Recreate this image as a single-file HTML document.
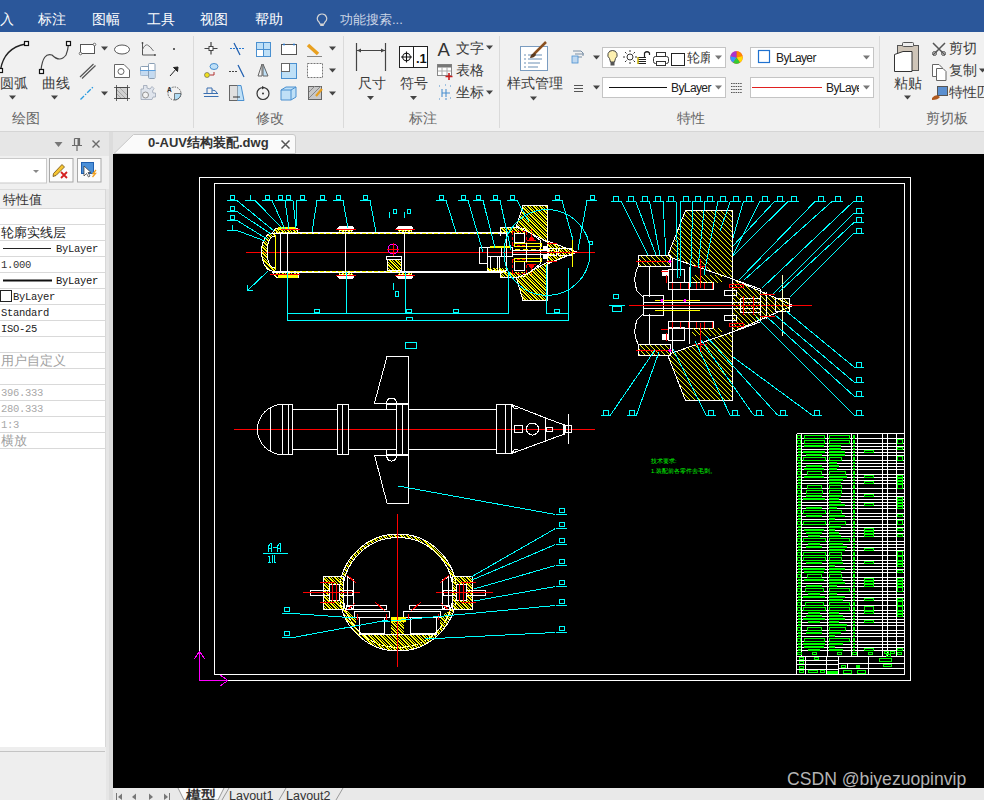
<!DOCTYPE html>
<html><head><meta charset="utf-8">
<style>
*{margin:0;padding:0;box-sizing:border-box}
html,body{width:984px;height:800px;overflow:hidden;background:#f0f0f0;font-family:"Liberation Sans",sans-serif;position:relative}
.abs{position:absolute}
#menubar{left:0;top:0;width:984px;height:32px;background:#2b579a}
#menubar span{position:absolute;top:12px;color:#fff;font-size:13.5px;line-height:16px;white-space:nowrap}
#ribbon{left:0;top:32px;width:984px;height:100px;background:#f1f1f1;border-bottom:1px solid #d5d5d5}
.sep{position:absolute;top:4px;width:1px;height:92px;background:#dadada}
.glabel{position:absolute;top:78px;font-size:14px;line-height:16px;color:#666;white-space:nowrap}
.rt{position:absolute;font-size:14px;line-height:16px;color:#3a3a3a;white-space:nowrap}
.combo{position:absolute;background:#fff;border:1px solid #c4c4c4}
#leftpanel{left:0;top:132px;width:109px;height:668px;background:#e6e6e6}
#splitter{left:109px;top:132px;width:4px;height:668px;background:#dcdcdc}
.row{position:absolute;left:0;width:105px;height:16px;border-bottom:1px solid #d9d9d9;font-size:12px;line-height:15px;color:#222;white-space:nowrap;overflow:hidden;background:#fff}
.mono{font-family:"Liberation Mono",monospace;font-size:10.5px;letter-spacing:-0.3px}
.gray{color:#9a9a9a}
#canvas{left:113px;top:154px;width:871px;height:634px;background:#000;overflow:hidden}
#tabbar{left:113px;top:132px;width:871px;height:22px;background:#e5e5e5}
#bottombar{left:113px;top:788px;width:871px;height:12px;background:#e9e9e9}
</style></head><body>
<div id="menubar" class="abs">
 <span style="left:0">入</span>
 <span style="left:38px">标注</span>
 <span style="left:92px">图幅</span>
 <span style="left:147px">工具</span>
 <span style="left:200px">视图</span>
 <span style="left:255px">帮助</span>
 <span style="left:340px;color:#cdd6e6;font-size:13px">功能搜索...</span>
 <svg class="abs" style="left:316px;top:13px" width="12" height="14" viewBox="0 0 12 14"><path d="M6,1 A4.5,4.5 0 0 0 3,9 L4,11 L8,11 L9,9 A4.5,4.5 0 0 0 6,1 Z" fill="none" stroke="#d4d4d4" stroke-width="1.2"/><rect x="4.2" y="11" width="3.6" height="2" fill="#d4d4d4"/></svg>
</div>
<div id="ribbon" class="abs">
 <div class="sep" style="left:193px"></div>
 <div class="sep" style="left:343px"></div>
 <div class="sep" style="left:499px"></div>
 <div class="sep" style="left:879px"></div>
 <div class="glabel" style="left:12px">绘图</div>
 <div class="glabel" style="left:256px">修改</div>
 <div class="glabel" style="left:409px">标注</div>
 <div class="glabel" style="left:677px">特性</div>
 <div class="glabel" style="left:926px">剪切板</div>
 <div class="rt" style="left:0;top:43px">圆弧</div>
 <div class="rt" style="left:42px;top:43px">曲线</div>
 <div class="rt" style="left:358px;top:43px">尺寸</div>
 <div class="rt" style="left:400px;top:43px">符号</div>
 <div class="rt" style="left:456px;top:8px">文字</div>
 <div class="rt" style="left:456px;top:30px">表格</div>
 <div class="rt" style="left:456px;top:52px">坐标</div>
 <div class="rt" style="left:507px;top:43px">样式管理</div>
 <div class="rt" style="left:894px;top:43px">粘贴</div>
 <div class="rt" style="left:949px;top:8px">剪切</div>
 <div class="rt" style="left:949px;top:30px">复制</div>
 <div class="rt" style="left:949px;top:52px">特性匹</div>
 <div class="combo" style="left:602px;top:15px;width:124px;height:21px"></div>
 <div class="combo" style="left:602px;top:45px;width:124px;height:21px"></div>
 <div class="combo" style="left:750px;top:15px;width:124px;height:21px"></div>
 <div class="combo" style="left:750px;top:45px;width:124px;height:21px"></div>
 <div class="rt" style="left:687px;top:18px;font-size:13px;width:23px;overflow:hidden">轮廓</div>
 <div class="rt" style="left:671px;top:48px;font-size:12px;color:#222;letter-spacing:-0.6px">ByLayer</div>
 <div class="rt" style="left:776px;top:18px;font-size:12px;color:#222;letter-spacing:-0.6px">ByLayer</div>
 <div class="rt" style="left:826px;top:48px;font-size:12px;color:#222;width:33px;overflow:hidden;letter-spacing:-0.6px">ByLayer</div>
</div>
<svg class="abs" style="left:0;top:0" width="984" height="131" viewBox="0 0 984 131">
<path d="M0.5,70 Q4,48 25.5,44" stroke="#222" fill="none" stroke-width="1.3"/>
<rect x="24.5" y="41.5" width="4" height="4" fill="#fff" stroke="#111" stroke-width="1.2"/>
<rect x="-1.5" y="68.5" width="4" height="4" fill="#fff" stroke="#111" stroke-width="1.2"/>
<path d="M9.0,95.5 L16.0,95.5 L12.5,99.5 Z" fill="#444"/>
<path d="M41,70 Q43,52 52,55 Q60,63 66,55 Q68,50 68.5,44" stroke="#444" fill="none" stroke-width="1.2"/>
<rect x="39.5" y="69.5" width="4" height="4" fill="#fff" stroke="#111" stroke-width="1.2"/>
<rect x="66.5" y="41.5" width="4" height="4" fill="#fff" stroke="#111" stroke-width="1.2"/>
<path d="M51.0,95.5 L58.0,95.5 L54.5,99.5 Z" fill="#444"/>
<rect x="80.5" y="44.5" width="14" height="9" fill="#fff" stroke="#555"/>
<circle cx="80.5" cy="53.5" r="1.3" fill="#fff" stroke="#555" stroke-width=".8"/><circle cx="94.5" cy="44.5" r="1.3" fill="#fff" stroke="#555" stroke-width=".8"/>
<path d="M101.0,46.5 L108.0,46.5 L104.5,50.5 Z" fill="#444"/>
<ellipse cx="122" cy="49.5" rx="7.5" ry="4.5" fill="#fff" stroke="#555"/>
<path d="M142.5,43 L142.5,55 L155,55" stroke="#555" fill="none"/><path d="M142.5,49.5 Q145,44 147.5,45 Q150,46 153.5,51" stroke="#666" fill="none" stroke-width=".9"/><circle cx="142.5" cy="43" r=".9" fill="#444"/><circle cx="155" cy="55" r=".9" fill="#444"/>
<circle cx="174" cy="49" r="1" fill="#333"/>
<path d="M80,77 L93.5,64 M82,78.5 L95.5,65.5" stroke="#555" stroke-width="1.2"/>
<path d="M114.5,64.5 L124,64.5 L129.5,70 L129.5,77.5 L114.5,77.5 Z" fill="#fff" stroke="#666"/><circle cx="121" cy="71.5" r="3" fill="none" stroke="#666"/>
<rect x="140.5" y="66.5" width="10" height="9" rx="1" fill="#fff" stroke="#8a9fb5"/><rect x="140.5" y="71" width="10" height="4.5" fill="#c4daf0"/><rect x="148.5" y="63.5" width="6.5" height="15" rx="1" fill="#fff" stroke="#8a9fb5"/><rect x="149" y="71" width="5.5" height="7" fill="#c4daf0"/><path d="M140,70.5 L155.5,70.5" stroke="#5aa0e0"/>
<path d="M170,76 L177,68 M173.5,67.5 L178,67 L177.5,71.5 Z" stroke="#222" fill="#222"/>
<path d="M80.5,99.5 L94,86" stroke="#2a9be0" stroke-width="1.3" stroke-dasharray="5,1.5,1.5,1.5"/>
<path d="M101.0,91.5 L108.0,91.5 L104.5,95.5 Z" fill="#444"/>
<rect x="116.5" y="87.5" width="11" height="11" fill="#d0d0d0" stroke="#555"/><path d="M114,87.5 L130,87.5 M114,98.5 L130,98.5 M116.5,85 L116.5,101 M127.5,85 L127.5,101" stroke="#444" stroke-width=".8"/><path d="M117,90 L125,98 M117,94 L121,98 M120,88 L127,95" stroke="#999" stroke-width=".8"/>
<path d="M141,99.5 L141,89 L143.5,89 L143.5,85.5 L147,85.5 L147,88 L150,89 L152,86.5 L154,88.5 L152.5,91 L153,93 L155.5,93 L155.5,97 L153,97 L152,99.5 Z" fill="#dfe4ec" stroke="#9aa5b5" stroke-width=".8"/><circle cx="145.5" cy="95" r="3" fill="#f1f1f1" stroke="#888" stroke-width=".9"/>
<circle cx="174.5" cy="93.5" r="6.5" fill="none" stroke="#444" stroke-width=".8" stroke-dasharray="1.5,1"/><path d="M174.5,93.5 L181,93.5 A6.5,6.5 0 0 1 174.5,100 Z" fill="#b0dcf5" stroke="#333" stroke-width=".6"/><text x="167" y="92" font-family="Liberation Sans" font-size="6.5" font-weight="bold" fill="#222">A</text>
<path d="M211,42 L211,54.5 M204.5,48.5 L217.5,48.5" stroke="#444" stroke-width="1.2"/><rect x="209" y="46.5" width="4" height="4" fill="#fff" stroke="#444"/>
<path d="M230,48.5 L245,48.5" stroke="#2a7ad0" stroke-dasharray="2,1"/><path d="M234,43 L240,55" stroke="#1f5fb0" stroke-width="1.3"/>
<rect x="256.5" y="42.5" width="7" height="7" fill="#bfe0f7" stroke="#4a90d0"/><rect x="263.5" y="42.5" width="7" height="7" fill="#bfe0f7" stroke="#4a90d0"/><rect x="256.5" y="49.5" width="7" height="7" fill="#fff" stroke="#4a90d0"/><rect x="263.5" y="49.5" width="7" height="7" fill="#bfe0f7" stroke="#4a90d0"/>
<rect x="281.5" y="44.5" width="15" height="10" fill="#fff" stroke="#555"/><circle cx="284" cy="44.5" r="1" fill="#2a7ad0"/><circle cx="294" cy="44.5" r="1" fill="#2a7ad0"/>
<path d="M308,45 L318,54" stroke="#e8a020" stroke-width="3.5"/><path d="M307,56.5 L322,56.5" stroke="#888"/>
<path d="M329.0,46.5 L336.0,46.5 L332.5,50.5 Z" fill="#444"/>
<circle cx="207" cy="75" r="2.5" fill="#f0e020" stroke="#555" stroke-width=".6"/><ellipse cx="214" cy="66.5" rx="4" ry="3" fill="#bfe0f7" stroke="#4a90d0"/><path d="M210,75 L214,75 L214,72" stroke="#b03030" fill="none"/>
<path d="M229,71.5 L237,71.5" stroke="#444" stroke-dasharray="2,1"/><path d="M238,65 L244,77" stroke="#1f5fb0" stroke-width="1.3"/>
<path d="M262,64 L258,76 L262,76 Z" fill="none" stroke="#666"/><path d="M263,64 L263,76 L268,76 Z" fill="#bfe0f7" stroke="#666"/>
<rect x="281.5" y="63.5" width="15" height="15" fill="#bfe0f7" stroke="#4a90d0"/><rect x="281.5" y="63.5" width="8" height="8" fill="#fff" stroke="#666"/>
<rect x="307.5" y="63.5" width="15" height="14" fill="#fff" stroke="#777" stroke-dasharray="2,1"/>
<path d="M329.0,68.5 L336.0,68.5 L332.5,72.5 Z" fill="#444"/>
<path d="M203.5,93.5 L218,93.5 M204,96.5 L218.5,96.5 M207,93 L207,88 L212,88 L212,93 M212,90 Q216,90 217,93" stroke="#3a6fb0" fill="none"/>
<rect x="229.5" y="85.5" width="8" height="15" fill="#e0e0e0" stroke="#666"/><path d="M237.5,85.5 L241,85.5 L244,100.5 L237.5,100.5" fill="#bfe0f7" stroke="#4a90d0"/><path d="M233,97 L240,97" stroke="#333"/>
<circle cx="263" cy="93.5" r="6" fill="none" stroke="#333" stroke-width="1.2"/><circle cx="263" cy="93.5" r="1" fill="#333"/><path d="M262,86 L265,87.5 L262,89.5" fill="#333"/>
<path d="M281,90 L286,87 L296,87 L296,97 L291,100 L281,100 Z M281,90 L291,90 L291,100 M291,90 L296,87" fill="#bfe0f7" stroke="#4a90d0"/>
<rect x="308.5" y="86.5" width="13" height="13" fill="#c8c8c8" stroke="#666"/><path d="M309,92 L315,86 M309,98 L321,86" stroke="#888"/><path d="M316,96 L322,89" stroke="#e8a020" stroke-width="2.2"/>
<path d="M329.0,91.5 L336.0,91.5 L332.5,95.5 Z" fill="#444"/>
<path d="M356.5,43 L356.5,71 M385.5,43 L385.5,71 M357,50.5 L385,50.5" stroke="#444" stroke-width="1.2"/><path d="M357,50.5 L361,48.5 L361,52.5 Z M385,50.5 L381,48.5 L381,52.5 Z" fill="#444"/>
<path d="M367.0,96 L374.0,96 L370.5,100 Z" fill="#444"/>
<rect x="399.5" y="46.5" width="28" height="21" fill="#fff" stroke="#222"/><line x1="413.5" y1="46.5" x2="413.5" y2="67.5" stroke="#222"/><circle cx="406.5" cy="57" r="3.8" fill="none" stroke="#111" stroke-width="1.1"/><path d="M401,57 L412,57 M406.5,51.5 L406.5,62.5" stroke="#111" stroke-width="1.1"/>
<text x="416" y="62.5" font-family="Liberation Sans" font-weight="bold" font-size="13" fill="#111">.1</text>
<path d="M410.0,96 L417.0,96 L413.5,100 Z" fill="#444"/>
<text x="437.5" y="56" font-family="Liberation Sans" font-size="18.5" fill="#333">A</text>
<path d="M486.0,45.5 L493.0,45.5 L489.5,49.5 Z" fill="#444"/>
<rect x="437.5" y="64.5" width="14" height="11" fill="#fff" stroke="#888"/><rect x="437.5" y="64.5" width="14" height="3" fill="#777"/><path d="M442,67 L442,75 M447,67 L447,75 M438,71 L451,71" stroke="#aaa"/><path d="M449,73 L449,80 M445.5,76.5 L452.5,76.5" stroke="#c81e1e" stroke-width="1.6"/>
<path d="M439,86 L440,86 M445,85 L446,85 M450,86 L451,86 M439,99 L440,99 M445,99 L447,99 M450,98 L451,98 M442,89 L442,97 M442,93 L450,93 M446,89 L446,97" stroke="#4a90d0" stroke-width="1.1"/>
<path d="M486.0,90.5 L493.0,90.5 L489.5,94.5 Z" fill="#444"/>
<rect x="520.5" y="46.5" width="27" height="24" fill="#fff" stroke="#7a9cc0"/>
<path d="M524,55 L526,55 M528,55 L542,55 M524,59 L526,59 M528,59 L542,59 M524,63 L526,63 M528,63 L540,63 M524,67 L526,67 M528,67 L538,67" stroke="#6a8fb5"/>
<path d="M534,54 L546,42" stroke="#8a5020" stroke-width="2.5"/><path d="M530,58 Q531,53 535,53 L536,55 Q534,58 530,58 Z" fill="#5a3a20"/>
<path d="M530.0,96.5 L537.0,96.5 L533.5,100.5 Z" fill="#444"/>
<path d="M573,51 L581,51 L583,53 L583,56 M575,54 L584,54 M573,57 L582,57" stroke="#7a8fa5" fill="none"/><rect x="572" y="56" width="6" height="7" fill="#bfd8f0" stroke="#4a90d0" stroke-width=".8"/>
<path d="M593.0,55.5 L600.0,55.5 L596.5,59.5 Z" fill="#444"/>
<path d="M574,85.5 L583,85.5 M574,88.5 L583,88.5 M574,91.5 L583,91.5" stroke="#555" stroke-width="1.2"/>
<path d="M593.0,85.5 L600.0,85.5 L596.5,89.5 Z" fill="#444"/>
<path d="M612.5,50.5 A4.5,4.5 0 0 0 609.5,58.5 L610.5,62 L614.5,62 L615.5,58.5 A4.5,4.5 0 0 0 612.5,50.5 Z" fill="#fdf0b0" stroke="#333" stroke-width=".9"/><rect x="610.5" y="62" width="4" height="3.5" fill="#555"/>
<circle cx="630" cy="57" r="3" fill="none" stroke="#333"/><path d="M630,50 L630,52 M630,62 L630,64 M623,57 L625,57 M635,57 L637,57 M625,52 L626.5,53.5 M633.5,60.5 L635,62 M635,52 L633.5,53.5 M626.5,60.5 L625,62" stroke="#333"/>
<path d="M638,57.5 L646,57.5 M638,59.5 L646,59.5 M638,61.5 L646,61.5 M638,63.5 L646,63.5" stroke="#222" stroke-width="1"/><path d="M638,57 L638,64" stroke="#c8b000" stroke-width="1.5"/><path d="M644.5,57 L644.5,53 Q647,50.5 649.5,53 L649.5,55" stroke="#222" fill="none" stroke-width="1.2"/>
<rect x="653.5" y="56.5" width="15" height="7" rx="2" fill="#fff" stroke="#333"/><rect x="656.5" y="52.5" width="9" height="4" fill="#fff" stroke="#333"/><rect x="656.5" y="61.5" width="9" height="4" fill="#fff" stroke="#333"/>
<rect x="671.5" y="53.5" width="13" height="12" fill="#fff" stroke="#222"/>
<path d="M715.0,55.5 L722.0,55.5 L718.5,59.5 Z" fill="#777"/>
<line x1="609" y1="87.5" x2="667" y2="87.5" stroke="#111"/>
<path d="M715.0,85.5 L722.0,85.5 L718.5,89.5 Z" fill="#777"/>
<circle cx="736.5" cy="57.5" r="6.2" fill="#f33"/><path d="M736.5,57.5 L736.5,51.3 A6.2,6.2 0 0 1 742.5,56 Z" fill="#f80"/><path d="M736.5,57.5 L742.5,56 A6.2,6.2 0 0 1 740,62.5 Z" fill="#fd0"/><path d="M736.5,57.5 L740,62.5 A6.2,6.2 0 0 1 733,62.5 Z" fill="#3c3"/><path d="M736.5,57.5 L733,62.5 A6.2,6.2 0 0 1 730.5,56 Z" fill="#39f"/><path d="M736.5,57.5 L730.5,56 A6.2,6.2 0 0 1 736.5,51.3 Z" fill="#a3c"/>
<path d="M731,83.5 L742,83.5 M731,86.5 L742,86.5 M731,89.5 L742,89.5 M731,92.5 L742,92.5" stroke="#555" stroke-dasharray="1.5,.8"/>
<rect x="758.5" y="50.5" width="11" height="12" fill="#fff" stroke="#1f72d0" stroke-width="1.2"/>
<path d="M863.0,55.5 L870.0,55.5 L866.5,59.5 Z" fill="#777"/>
<line x1="752" y1="87.5" x2="822" y2="87.5" stroke="#e02020"/>
<path d="M863.0,85.5 L870.0,85.5 L866.5,89.5 Z" fill="#777"/>
<rect x="897.5" y="45.5" width="21" height="25" fill="#cfc5b8" stroke="#555"/><rect x="902.5" y="42.5" width="11" height="4" rx="1" fill="#eee" stroke="#555"/>
<path d="M894.5,54.5 L903,51.5 L912,51.5 L912,71.5 L894.5,71.5 Z" fill="#fff" stroke="#333"/>
<path d="M904.0,95.5 L911.0,95.5 L907.5,99.5 Z" fill="#444"/>
<path d="M933,43 L945,55 M945,43 L933,55" stroke="#555" stroke-width="1.5"/><circle cx="934.5" cy="53.5" r="2" fill="none" stroke="#555"/><circle cx="943.5" cy="53.5" r="2" fill="none" stroke="#555"/>
<path d="M932.5,64.5 L939,64.5 L942,67.5 L942,76.5 L932.5,76.5 Z" fill="#fff" stroke="#666"/><path d="M936.5,68.5 L943,68.5 L946,71.5 L946,80.5 L936.5,80.5 Z" fill="#fff" stroke="#666"/>
<path d="M979.0,68.5 L986.0,68.5 L982.5,72.5 Z" fill="#444"/>
<rect x="937.5" y="86.5" width="10" height="9" fill="#5a8fd0" stroke="#555"/><path d="M932,98 Q936,93 940,97 Q938,100 932,100 Z" fill="#b05a20"/>
</svg>
<div id="leftpanel" class="abs">
<svg class="abs" style="left:0;top:0" width="109" height="668" viewBox="0 132 109 668">
<path d="M54.5,142 L62.5,142 L58.5,147 Z" fill="#777"/>
<path d="M74.5,138.5 L79.5,138.5 L79.5,145.5 M74.5,138.5 L74.5,145.5 M72,145.5 L82,145.5 M77,146 L77,151" stroke="#6a6a6a" fill="none" stroke-width="1.2"/><rect x="77.5" y="139" width="1.5" height="6" fill="#6a6a6a"/>
<path d="M92.5,140.5 L99.5,147.5 M99.5,140.5 L92.5,147.5" stroke="#6a6a6a" stroke-width="1.4"/>
<rect x="0" y="156" width="109" height="33" fill="#f0f0f0"/>
<rect x="-1" y="158.5" width="47.5" height="24.5" fill="#fff" stroke="#c9c9c9"/>
<path d="M33,170 L39,170 L36,173 Z" fill="#888"/>
<rect x="49.5" y="158.5" width="23.5" height="23.5" fill="#fcfcfc" stroke="#a8a8a8"/>
<rect x="77.5" y="158.5" width="23.5" height="23.5" fill="#fcfcfc" stroke="#a8a8a8"/>
<path d="M53.5,173.5 L62,164.5 L64.5,167 L56,175.5 L53,176.5 Z" fill="#f5c431" stroke="#6b4a10" stroke-width=".8"/>
<path d="M61,177 L67,183 M67,177 L61,183" stroke="#d42020" stroke-width="1.8" transform="translate(0,-5)"/>
<rect x="81.5" y="162.5" width="12" height="11" fill="#4a8fd8" stroke="#1f5fb0"/>
<path d="M84,166 L84,176 L86.5,173.5 L88.5,177 L90,176 L88,172.5 L91,172.5 Z" fill="#fff" stroke="#333" stroke-width=".7"/>
<path d="M96,170 L93,173.5 L95.5,173.5 L92.5,177" stroke="#f0a020" fill="none" stroke-width="1.3"/>
<rect x="0" y="189" width="106" height="558" fill="#fff"/>
<rect x="0" y="189" width="105" height="19" fill="#f0f0f0"/>
<line x1="0" y1="189.5" x2="105" y2="189.5" stroke="#dcdcdc"/>
<line x1="105.5" y1="189" x2="105.5" y2="747" stroke="#d8d8d8"/>
<line x1="0" y1="208.5" x2="105" y2="208.5" stroke="#d9d9d9"/>
<line x1="0" y1="224.5" x2="105" y2="224.5" stroke="#d9d9d9"/>
<line x1="0" y1="240.5" x2="105" y2="240.5" stroke="#d9d9d9"/>
<line x1="0" y1="256.5" x2="105" y2="256.5" stroke="#d9d9d9"/>
<line x1="0" y1="272.5" x2="105" y2="272.5" stroke="#d9d9d9"/>
<line x1="0" y1="288.5" x2="105" y2="288.5" stroke="#d9d9d9"/>
<line x1="0" y1="304.5" x2="105" y2="304.5" stroke="#d9d9d9"/>
<line x1="0" y1="320.5" x2="105" y2="320.5" stroke="#d9d9d9"/>
<line x1="0" y1="336.5" x2="105" y2="336.5" stroke="#d9d9d9"/>
<line x1="0" y1="352.5" x2="105" y2="352.5" stroke="#d9d9d9"/>
<line x1="0" y1="368.5" x2="105" y2="368.5" stroke="#d9d9d9"/>
<line x1="0" y1="384.5" x2="105" y2="384.5" stroke="#d9d9d9"/>
<line x1="0" y1="400.5" x2="105" y2="400.5" stroke="#d9d9d9"/>
<line x1="0" y1="416.5" x2="105" y2="416.5" stroke="#d9d9d9"/>
<line x1="0" y1="432.5" x2="105" y2="432.5" stroke="#d9d9d9"/>
<line x1="0" y1="448.5" x2="105" y2="448.5" stroke="#d9d9d9"/>
<line x1="3" y1="248.5" x2="51" y2="248.5" stroke="#222"/>
<line x1="3" y1="280.5" x2="52" y2="280.5" stroke="#111" stroke-width="2"/>
<rect x="0.5" y="290.5" width="11" height="11" fill="none" stroke="#222"/>
<rect x="0" y="747" width="106" height="53" fill="#eeeeee"/>
<line x1="0" y1="751.5" x2="105" y2="751.5" stroke="#c4c4c4"/>
</svg>
<div class="abs " style="left:3px;top:60px;white-space:nowrap;line-height:16px;font-size:12.5px;color:#333">特性值</div>
<div class="abs " style="left:1px;top:93px;white-space:nowrap;line-height:16px;font-size:12.5px;color:#222">轮廓实线层</div>
<div class="abs mono" style="left:56px;top:109px;white-space:nowrap;line-height:16px;color:#222">ByLayer</div>
<div class="abs mono" style="left:1px;top:125px;white-space:nowrap;line-height:16px;color:#333">1.000</div>
<div class="abs mono" style="left:56px;top:141px;white-space:nowrap;line-height:16px;color:#111">ByLayer</div>
<div class="abs mono" style="left:13px;top:157px;white-space:nowrap;line-height:16px;color:#222">ByLayer</div>
<div class="abs mono" style="left:1px;top:173px;white-space:nowrap;line-height:16px;color:#222">Standard</div>
<div class="abs mono" style="left:1px;top:189px;white-space:nowrap;line-height:16px;color:#222">ISO-25</div>
<div class="abs " style="left:1px;top:221px;white-space:nowrap;line-height:16px;font-size:13px;color:#a0a0a0">用户自定义</div>
<div class="abs mono" style="left:1px;top:253px;white-space:nowrap;line-height:16px;color:#a8a8a8">396.333</div>
<div class="abs mono" style="left:1px;top:269px;white-space:nowrap;line-height:16px;color:#a8a8a8">280.333</div>
<div class="abs mono" style="left:1px;top:285px;white-space:nowrap;line-height:16px;color:#a8a8a8">1:3</div>
<div class="abs " style="left:1px;top:301px;white-space:nowrap;line-height:16px;font-size:13px;color:#a0a0a0">横放</div>
</div>
<div id="splitter" class="abs"></div>
<div id="tabbar" class="abs">
 <svg class="abs" style="left:0;top:0" width="200" height="22" viewBox="113 132 200 22"><path d="M114,153.5 L133.5,134.5 L293,134.5 Q295.5,134.5 295.5,137 L295.5,153.5 Z" fill="#fafafa" stroke="#c8c8c8" stroke-width="1"/>
 <path d="M281.5,140.5 L289.5,148.5 M289.5,140.5 L281.5,148.5" stroke="#555" stroke-width="1.5"/></svg>
 <div class="abs" style="left:35px;top:3px;font-size:13px;font-weight:bold;color:#333;line-height:16px;white-space:nowrap">0-AUV结构装配.dwg</div>
</div>
<div id="canvas" class="abs">
<svg width="871" height="634" viewBox="113 154 871 634" style="position:absolute;left:0;top:0" shape-rendering="crispEdges">
<defs><pattern id="hy" width="6" height="6" patternUnits="userSpaceOnUse"><g fill="#ffff00" shape-rendering="crispEdges"><rect x="0" y="0" width="1" height="1"/><rect x="3" y="0" width="1" height="1"/><rect x="4" y="0" width="1" height="1"/><rect x="1" y="1" width="1" height="1"/><rect x="4" y="1" width="1" height="1"/><rect x="5" y="1" width="1" height="1"/><rect x="0" y="2" width="1" height="1"/><rect x="2" y="2" width="1" height="1"/><rect x="5" y="2" width="1" height="1"/><rect x="0" y="3" width="1" height="1"/><rect x="1" y="3" width="1" height="1"/><rect x="3" y="3" width="1" height="1"/><rect x="1" y="4" width="1" height="1"/><rect x="2" y="4" width="1" height="1"/><rect x="4" y="4" width="1" height="1"/><rect x="2" y="5" width="1" height="1"/><rect x="3" y="5" width="1" height="1"/><rect x="5" y="5" width="1" height="1"/></g></pattern><pattern id="hy2" width="5" height="5" patternUnits="userSpaceOnUse"><g fill="#ffff00" shape-rendering="crispEdges"><rect x="0" y="0" width="1" height="1"/><rect x="1" y="1" width="1" height="1"/><rect x="2" y="2" width="1" height="1"/><rect x="3" y="3" width="1" height="1"/><rect x="4" y="4" width="1" height="1"/></g></pattern></defs>
<rect x="199.5" y="177.5" width="711" height="503" stroke="#ffffff" fill="none" stroke-width="1"/>
<rect x="214.5" y="183.5" width="690" height="491" stroke="#ffffff" fill="none" stroke-width="1"/>
<line x1="199.5" y1="651" x2="199.5" y2="680.5" stroke="#ff00ff" stroke-width="1" />
<line x1="199.5" y1="680.5" x2="228" y2="680.5" stroke="#ff00ff" stroke-width="1" />
<line x1="199.5" y1="651" x2="194.5" y2="659" stroke="#ff00ff" stroke-width="1" />
<line x1="199.5" y1="651" x2="204.5" y2="659" stroke="#ff00ff" stroke-width="1" />
<line x1="228" y1="680.5" x2="220" y2="675" stroke="#ff00ff" stroke-width="1" />
<line x1="228" y1="680.5" x2="220" y2="686" stroke="#ff00ff" stroke-width="1" />
<line x1="246" y1="252.5" x2="595" y2="252.5" stroke="#ff0000" stroke-width="1" />
<line x1="276" y1="233" x2="506" y2="233" stroke="#ffffff" stroke-width="2" />
<line x1="276" y1="272" x2="506" y2="272" stroke="#ffffff" stroke-width="2" />
<line x1="290" y1="233.5" x2="500" y2="233.5" stroke="#ffff00" stroke-width="1" stroke-dasharray="4,2"/>
<line x1="290" y1="271.5" x2="400" y2="271.5" stroke="#ffff00" stroke-width="1" stroke-dasharray="4,2"/>
<line x1="280.5" y1="233" x2="280.5" y2="272" stroke="#ffffff" stroke-width="1" />
<line x1="287.5" y1="233" x2="287.5" y2="272" stroke="#ffffff" stroke-width="1" />
<line x1="345.5" y1="233" x2="345.5" y2="272" stroke="#ffffff" stroke-width="1" />
<line x1="404.5" y1="233" x2="404.5" y2="272" stroke="#ffffff" stroke-width="1" />
<path d="M276,272 L272.5,271 A11,19 0 0 1 272.5,233 L276,233 L276,237 L274,236.5 A7,15.5 0 0 0 274,267.5 L276,268 Z" stroke="none" fill="url(#hy)" stroke-width="1"/>
<path d="M276,233 L272.5,233 A11,19 0 0 0 272.5,271 L276,272" stroke="#ffffff" fill="none" stroke-width="1"/>
<path d="M276,237 L274,236.5 A7,15.5 0 0 0 274,267.5 L276,268" stroke="#ffffff" fill="none" stroke-width="1"/>
<line x1="275.5" y1="236" x2="275.5" y2="269" stroke="#ffff00" stroke-width="1" />
<path d="M272,233 L276,228 L297,228 L297,233 Z" stroke="#ffffff" fill="url(#hy)" stroke-width="1"/>
<path d="M272,272 L276,277 L298,277 L298,272 Z" stroke="#ffffff" fill="url(#hy)" stroke-width="1"/>
<rect x="278" y="227" width="18" height="3" fill="#ffff00"/>
<rect x="278" y="275" width="20" height="3" fill="#ffff00"/>
<line x1="281" y1="229.5" x2="300" y2="229.5" stroke="#ff0000" stroke-width="1" />
<line x1="270" y1="274.5" x2="300" y2="274.5" stroke="#ff0000" stroke-width="1" />
<ellipse cx="346" cy="228.5" rx="8" ry="2.5" stroke="#ffffff" fill="#ffffff" stroke-width="1"/>
<line x1="336" y1="229.5" x2="356" y2="229.5" stroke="#ff0000" stroke-width="1" />
<rect x="339" y="230" width="14" height="2" fill="url(#hy)"/>
<ellipse cx="346" cy="276.5" rx="8" ry="2.5" stroke="#ffffff" fill="#ffffff" stroke-width="1"/>
<line x1="336" y1="275.5" x2="356" y2="275.5" stroke="#ff0000" stroke-width="1" />
<rect x="339" y="273" width="14" height="2" fill="url(#hy)"/>
<ellipse cx="405" cy="228.5" rx="8" ry="2.5" stroke="#ffffff" fill="#ffffff" stroke-width="1"/>
<line x1="395" y1="229.5" x2="415" y2="229.5" stroke="#ff0000" stroke-width="1" />
<rect x="398" y="230" width="14" height="2" fill="url(#hy)"/>
<ellipse cx="405" cy="276.5" rx="8" ry="2.5" stroke="#ffffff" fill="#ffffff" stroke-width="1"/>
<line x1="395" y1="275.5" x2="415" y2="275.5" stroke="#ff0000" stroke-width="1" />
<rect x="398" y="273" width="14" height="2" fill="url(#hy)"/>
<circle cx="393" cy="249" r="5" stroke="#ff00ff" fill="none" stroke-width="1"/>
<line x1="393" y1="243" x2="393" y2="256" stroke="#ff0000" stroke-width="1" />
<line x1="387" y1="249.5" x2="399" y2="249.5" stroke="#ff0000" stroke-width="1" />
<rect x="386.5" y="256.5" width="15" height="3" stroke="#ffffff" fill="none" stroke-width="1"/>
<rect x="387" y="259" width="15" height="12" fill="url(#hy)"/>
<rect x="387.5" y="259.5" width="14" height="11" stroke="#ffffff" fill="none" stroke-width="1"/>
<path d="M500.5,236 L500.5,227.5 L515,227.5 L525,229 L540,240 L540,264 L525,276 L515,277.5 L500.5,277.5 L500.5,268" stroke="#ffffff" fill="none" stroke-width="1"/>
<rect x="501" y="228" width="24" height="5" fill="url(#hy)"/>
<rect x="501" y="272" width="24" height="5" fill="url(#hy)"/>
<line x1="500.5" y1="228" x2="500.5" y2="236" stroke="#ffffff" stroke-width="1" />
<line x1="500.5" y1="268" x2="500.5" y2="277" stroke="#ffffff" stroke-width="1" />
<line x1="506.5" y1="232" x2="506.5" y2="270" stroke="#ffffff" stroke-width="1" />
<rect x="479.5" y="247.5" width="8" height="16" stroke="#ffffff" fill="none" stroke-width="1"/>
<rect x="487.5" y="247.5" width="25" height="9" stroke="#ffffff" fill="none" stroke-width="1"/>
<line x1="501.5" y1="247" x2="501.5" y2="257" stroke="#ffffff" stroke-width="1" />
<rect x="487.5" y="256.5" width="19" height="14" stroke="#ffffff" fill="none" stroke-width="1"/>
<line x1="490.5" y1="257" x2="490.5" y2="270" stroke="#ffffff" stroke-width="1" />
<line x1="497.5" y1="257" x2="497.5" y2="270" stroke="#ffffff" stroke-width="1" />
<line x1="499.5" y1="257" x2="499.5" y2="270" stroke="#ffffff" stroke-width="1" />
<rect x="487" y="268" width="19" height="3" fill="url(#hy)"/>
<rect x="490" y="246" width="20" height="2" fill="#ffff00"/>
<rect x="514.5" y="233.5" width="10" height="9" stroke="#ffffff" fill="none" stroke-width="1"/>
<line x1="512" y1="231.0" x2="527" y2="231.0" stroke="#ff0000" stroke-width="1" stroke-dasharray="3,2"/>
<line x1="512" y1="245.0" x2="527" y2="245.0" stroke="#ff0000" stroke-width="1" stroke-dasharray="3,2"/>
<line x1="512.5" y1="231.5" x2="512.5" y2="244.5" stroke="#ff0000" stroke-width="1" stroke-dasharray="3,2"/>
<line x1="526.5" y1="231.5" x2="526.5" y2="244.5" stroke="#ff0000" stroke-width="1" stroke-dasharray="3,2"/>
<rect x="514.5" y="261.5" width="10" height="9" stroke="#ffffff" fill="none" stroke-width="1"/>
<line x1="512" y1="259.0" x2="527" y2="259.0" stroke="#ff0000" stroke-width="1" stroke-dasharray="3,2"/>
<line x1="512" y1="273.0" x2="527" y2="273.0" stroke="#ff0000" stroke-width="1" stroke-dasharray="3,2"/>
<line x1="512.5" y1="259.5" x2="512.5" y2="272.5" stroke="#ff0000" stroke-width="1" stroke-dasharray="3,2"/>
<line x1="526.5" y1="259.5" x2="526.5" y2="272.5" stroke="#ff0000" stroke-width="1" stroke-dasharray="3,2"/>
<rect x="514.5" y="243.5" width="27" height="3" stroke="#ffff00" fill="none" stroke-width="1"/>
<rect x="514.5" y="258.5" width="27" height="3" stroke="#ffff00" fill="none" stroke-width="1"/>
<line x1="531.5" y1="229" x2="531.5" y2="241" stroke="#ff0000" stroke-width="1" />
<line x1="527" y1="240.5" x2="536" y2="240.5" stroke="#ff0000" stroke-width="1" />
<polygon points="529,240 534,240 531.5,236" stroke="#ff0000" fill="#ff0000" stroke-width="1"/>
<line x1="531.5" y1="264" x2="531.5" y2="276" stroke="#ff0000" stroke-width="1" />
<line x1="527" y1="264.5" x2="536" y2="264.5" stroke="#ff0000" stroke-width="1" />
<polygon points="529,265 534,265 531.5,269" stroke="#ff0000" fill="#ff0000" stroke-width="1"/>
<line x1="526.5" y1="243" x2="526.5" y2="262" stroke="#ffffff" stroke-width="1" />
<line x1="512" y1="250.5" x2="555" y2="250.5" stroke="#ffffff" stroke-width="1" />
<line x1="512" y1="254.5" x2="555" y2="254.5" stroke="#ffffff" stroke-width="1" />
<line x1="515" y1="249.5" x2="550" y2="249.5" stroke="#ffff00" stroke-width="1" stroke-dasharray="5,3"/>
<polygon points="523,205.5 547.5,205.5 547.5,242 528,232 516.5,226" stroke="#ffffff" fill="url(#hy)" stroke-width="1"/>
<polygon points="516.5,278 528,273 547.5,262 547.5,300.5 523,300.5" stroke="#ffffff" fill="url(#hy)" stroke-width="1"/>
<polygon points="547,241 577,252 547,264" stroke="#ffffff" fill="url(#hy)" stroke-width="1"/>
<rect x="548.5" y="248.5" width="8" height="7" stroke="#ffffff" fill="none" stroke-width="1"/>
<rect x="558.5" y="248.5" width="14" height="7" stroke="#ffffff" fill="none" stroke-width="1"/>
<line x1="540" y1="252.5" x2="578" y2="252.5" stroke="#ff0000" stroke-width="1" />
<circle cx="545" cy="248" r="2" stroke="#ffffff" fill="#ffffff" stroke-width="1"/>
<circle cx="545" cy="257" r="2" stroke="#ffffff" fill="#ffffff" stroke-width="1"/>
<line x1="547" y1="243.5" x2="557" y2="243.5" stroke="#ff0000" stroke-width="1" />
<line x1="547" y1="261.5" x2="557" y2="261.5" stroke="#ff0000" stroke-width="1" />
<line x1="572.5" y1="239" x2="572.5" y2="267" stroke="#ffff00" stroke-width="1" />
<circle cx="547" cy="252.5" r="43" stroke="#00ffff" fill="none" stroke-width="1"/>
<line x1="287.5" y1="272" x2="287.5" y2="321" stroke="#00ffff" stroke-width="1" />
<line x1="346.5" y1="272" x2="346.5" y2="314" stroke="#00ffff" stroke-width="1" />
<line x1="405.5" y1="272" x2="405.5" y2="314" stroke="#00ffff" stroke-width="1" />
<line x1="508.5" y1="272" x2="508.5" y2="314" stroke="#00ffff" stroke-width="1" />
<line x1="546.5" y1="265" x2="546.5" y2="314" stroke="#00ffff" stroke-width="1" />
<line x1="568.5" y1="268" x2="568.5" y2="321" stroke="#00ffff" stroke-width="1" />
<line x1="287" y1="313.5" x2="509" y2="313.5" stroke="#00ffff" stroke-width="1" />
<line x1="546" y1="313.5" x2="569" y2="313.5" stroke="#00ffff" stroke-width="1" />
<line x1="287" y1="320.5" x2="569" y2="320.5" stroke="#00ffff" stroke-width="1" />
<rect x="314.5" y="309.5" width="5" height="3" stroke="#00ffff" fill="none" stroke-width="1"/>
<rect x="406.5" y="309.5" width="5" height="3" stroke="#00ffff" fill="none" stroke-width="1"/>
<rect x="453.5" y="309.5" width="5" height="3" stroke="#00ffff" fill="none" stroke-width="1"/>
<rect x="554.5" y="309.5" width="5" height="3" stroke="#00ffff" fill="none" stroke-width="1"/>
<rect x="406.5" y="317.5" width="6" height="3" stroke="#00ffff" fill="none" stroke-width="1"/>
<line x1="227" y1="200.5" x2="237" y2="200.5" stroke="#00ffff" stroke-width="1" />
<rect x="230.5" y="195.5" width="4" height="4" stroke="#00ffff" fill="none" stroke-width="1"/>
<line x1="237" y1="200.5" x2="274" y2="231" stroke="#00ffff" stroke-width="1" />
<line x1="227" y1="211.5" x2="237" y2="211.5" stroke="#00ffff" stroke-width="1" />
<rect x="230.5" y="206.5" width="4" height="4" stroke="#00ffff" fill="none" stroke-width="1"/>
<line x1="237" y1="211.5" x2="271" y2="234" stroke="#00ffff" stroke-width="1" />
<line x1="227" y1="220.5" x2="237" y2="220.5" stroke="#00ffff" stroke-width="1" />
<rect x="230.5" y="215.5" width="4" height="4" stroke="#00ffff" fill="none" stroke-width="1"/>
<line x1="237" y1="220.5" x2="267" y2="239" stroke="#00ffff" stroke-width="1" />
<line x1="227" y1="230.5" x2="237" y2="230.5" stroke="#00ffff" stroke-width="1" />
<line x1="232.5" y1="225" x2="232.5" y2="230" stroke="#00ffff" stroke-width="1" />
<line x1="237" y1="230.5" x2="265" y2="241" stroke="#00ffff" stroke-width="1" />
<line x1="245" y1="200.5" x2="255" y2="200.5" stroke="#00ffff" stroke-width="1" />
<line x1="250.5" y1="195" x2="250.5" y2="200" stroke="#00ffff" stroke-width="1" />
<line x1="255" y1="200.5" x2="283" y2="229" stroke="#00ffff" stroke-width="1" />
<line x1="262" y1="200.5" x2="272" y2="200.5" stroke="#00ffff" stroke-width="1" />
<rect x="265.5" y="195.5" width="4" height="4" stroke="#00ffff" fill="none" stroke-width="1"/>
<line x1="272" y1="200.5" x2="285" y2="229" stroke="#00ffff" stroke-width="1" />
<line x1="275" y1="200.5" x2="285" y2="200.5" stroke="#00ffff" stroke-width="1" />
<rect x="278.5" y="195.5" width="4" height="4" stroke="#00ffff" fill="none" stroke-width="1"/>
<line x1="285" y1="200.5" x2="289" y2="229" stroke="#00ffff" stroke-width="1" />
<line x1="283" y1="200.5" x2="293" y2="200.5" stroke="#00ffff" stroke-width="1" />
<rect x="286.5" y="195.5" width="4" height="4" stroke="#00ffff" fill="none" stroke-width="1"/>
<line x1="293" y1="200.5" x2="296" y2="228" stroke="#00ffff" stroke-width="1" />
<line x1="297" y1="200.5" x2="307" y2="200.5" stroke="#00ffff" stroke-width="1" />
<rect x="300.5" y="195.5" width="4" height="4" stroke="#00ffff" fill="none" stroke-width="1"/>
<line x1="297" y1="200.5" x2="296" y2="227" stroke="#00ffff" stroke-width="1" />
<line x1="317" y1="200.5" x2="327" y2="200.5" stroke="#00ffff" stroke-width="1" />
<rect x="320.5" y="195.5" width="4" height="4" stroke="#00ffff" fill="none" stroke-width="1"/>
<line x1="317" y1="200.5" x2="312" y2="232" stroke="#00ffff" stroke-width="1" />
<line x1="333" y1="200.5" x2="343" y2="200.5" stroke="#00ffff" stroke-width="1" />
<rect x="336.5" y="195.5" width="4" height="4" stroke="#00ffff" fill="none" stroke-width="1"/>
<line x1="343" y1="200.5" x2="348" y2="228" stroke="#00ffff" stroke-width="1" />
<line x1="360" y1="200.5" x2="370" y2="200.5" stroke="#00ffff" stroke-width="1" />
<rect x="363.5" y="195.5" width="4" height="4" stroke="#00ffff" fill="none" stroke-width="1"/>
<line x1="370" y1="200.5" x2="376" y2="232" stroke="#00ffff" stroke-width="1" />
<line x1="436" y1="200.5" x2="446" y2="200.5" stroke="#00ffff" stroke-width="1" />
<rect x="439.5" y="195.5" width="4" height="4" stroke="#00ffff" fill="none" stroke-width="1"/>
<line x1="446" y1="200.5" x2="456" y2="232" stroke="#00ffff" stroke-width="1" />
<line x1="458" y1="200.5" x2="468" y2="200.5" stroke="#00ffff" stroke-width="1" />
<rect x="461.5" y="195.5" width="4" height="4" stroke="#00ffff" fill="none" stroke-width="1"/>
<line x1="468" y1="200.5" x2="483" y2="252" stroke="#00ffff" stroke-width="1" />
<line x1="473" y1="200.5" x2="483" y2="200.5" stroke="#00ffff" stroke-width="1" />
<rect x="476.5" y="195.5" width="4" height="4" stroke="#00ffff" fill="none" stroke-width="1"/>
<line x1="483" y1="200.5" x2="495" y2="248" stroke="#00ffff" stroke-width="1" />
<line x1="490" y1="200.5" x2="500" y2="200.5" stroke="#00ffff" stroke-width="1" />
<rect x="493.5" y="195.5" width="4" height="4" stroke="#00ffff" fill="none" stroke-width="1"/>
<line x1="500" y1="200.5" x2="511" y2="250" stroke="#00ffff" stroke-width="1" />
<line x1="507" y1="200.5" x2="517" y2="200.5" stroke="#00ffff" stroke-width="1" />
<rect x="510.5" y="195.5" width="4" height="4" stroke="#00ffff" fill="none" stroke-width="1"/>
<line x1="517" y1="200.5" x2="529" y2="222" stroke="#00ffff" stroke-width="1" />
<line x1="552" y1="200.5" x2="562" y2="200.5" stroke="#00ffff" stroke-width="1" />
<rect x="555.5" y="195.5" width="4" height="4" stroke="#00ffff" fill="none" stroke-width="1"/>
<line x1="562" y1="200.5" x2="573" y2="240" stroke="#00ffff" stroke-width="1" />
<line x1="587" y1="200.5" x2="597" y2="200.5" stroke="#00ffff" stroke-width="1" />
<rect x="590.5" y="195.5" width="4" height="4" stroke="#00ffff" fill="none" stroke-width="1"/>
<line x1="587" y1="200.5" x2="578" y2="250" stroke="#00ffff" stroke-width="1" />
<line x1="389" y1="212" x2="389" y2="218" stroke="#00ffff" stroke-width="1" />
<rect x="393.5" y="209.5" width="3" height="4" stroke="#00ffff" fill="none" stroke-width="1"/>
<line x1="404" y1="212" x2="404" y2="218" stroke="#00ffff" stroke-width="1" />
<rect x="407.5" y="209.5" width="3" height="4" stroke="#00ffff" fill="none" stroke-width="1"/>
<line x1="393.5" y1="283" x2="393.5" y2="290" stroke="#00ffff" stroke-width="1" />
<rect x="395.5" y="291.5" width="3" height="5" stroke="#00ffff" fill="none" stroke-width="1"/>
<rect x="589.5" y="241.5" width="3" height="3" stroke="#00ffff" fill="none" stroke-width="1"/>
<line x1="247" y1="291" x2="268" y2="271" stroke="#00ffff" stroke-width="1" />
<line x1="247" y1="291" x2="248" y2="285" stroke="#00ffff" stroke-width="1" />
<line x1="247" y1="291" x2="253" y2="290" stroke="#00ffff" stroke-width="1" />
<polygon points="685.5,210.5 732.5,210.5 732.5,279 672,258 668,255" stroke="#ffffff" fill="url(#hy2)" stroke-width="1"/>
<polygon points="668,356 672,353 732.5,332 732.5,400.5 685.5,400.5" stroke="#ffffff" fill="url(#hy2)" stroke-width="1"/>
<polygon points="732.5,279 793,305.5 732.5,332" stroke="#ffffff" fill="url(#hy2)" stroke-width="1"/>
<polygon points="672,258 732.5,279 760,289 760,322 732.5,332 672,353" stroke="#ffffff" fill="none" stroke-width="1"/>
<rect x="638" y="255" width="33" height="12" fill="url(#hy2)"/>
<rect x="638.5" y="255.5" width="32" height="11" stroke="#ffffff" fill="none" stroke-width="1"/>
<line x1="636" y1="261.5" x2="672" y2="261.5" stroke="#ff0000" stroke-width="1" />
<circle cx="670" cy="261.5" r="1" stroke="#ff00ff" fill="#ff00ff" stroke-width="1"/>
<rect x="638" y="344" width="33" height="12" fill="url(#hy2)"/>
<rect x="638.5" y="344.5" width="32" height="11" stroke="#ffffff" fill="none" stroke-width="1"/>
<line x1="636" y1="350.5" x2="672" y2="350.5" stroke="#ff0000" stroke-width="1" />
<circle cx="670" cy="350.5" r="1" stroke="#ff00ff" fill="#ff00ff" stroke-width="1"/>
<path d="M638,267 Q632,278 637,291 L643,297 L643,314 L637,320 Q632,333 638,344" stroke="#ffffff" fill="none" stroke-width="1"/>
<line x1="649.5" y1="267" x2="649.5" y2="297" stroke="#ffffff" stroke-width="1" />
<line x1="649.5" y1="314" x2="649.5" y2="344" stroke="#ffffff" stroke-width="1" />
<line x1="689.5" y1="267" x2="689.5" y2="344" stroke="#ffffff" stroke-width="1" />
<rect x="668.5" y="269.5" width="16" height="13" stroke="#ffffff" fill="none" stroke-width="1"/>
<circle cx="665" cy="273.0" r="3" stroke="#ffffff" fill="#ffffff" stroke-width="1"/>
<line x1="666" y1="274.5" x2="666" y2="282.5" stroke="#ff0000" stroke-width="1" />
<line x1="661" y1="271.0" x2="668" y2="271.0" stroke="#ff0000" stroke-width="1" />
<rect x="668.5" y="327.5" width="16" height="13" stroke="#ffffff" fill="none" stroke-width="1"/>
<circle cx="665" cy="337.0" r="3" stroke="#ffffff" fill="#ffffff" stroke-width="1"/>
<line x1="666" y1="332.5" x2="666" y2="340.5" stroke="#ff0000" stroke-width="1" />
<line x1="661" y1="329.0" x2="668" y2="329.0" stroke="#ff0000" stroke-width="1" />
<rect x="643.5" y="295.5" width="20" height="20" stroke="#ffffff" fill="none" stroke-width="1"/>
<rect x="668.5" y="282.5" width="45" height="7" stroke="#ffffff" fill="none" stroke-width="1"/>
<rect x="668.5" y="321.5" width="45" height="7" stroke="#ffffff" fill="none" stroke-width="1"/>
<rect x="692" y="275" width="30" height="8" fill="url(#hy2)"/>
<rect x="692" y="328" width="30" height="8" fill="url(#hy2)"/>
<line x1="672" y1="283" x2="672" y2="289" stroke="#ff0000" stroke-width="1" />
<line x1="672" y1="322" x2="672" y2="328" stroke="#ff0000" stroke-width="1" />
<line x1="680" y1="283" x2="680" y2="289" stroke="#ff0000" stroke-width="1" />
<line x1="680" y1="322" x2="680" y2="328" stroke="#ff0000" stroke-width="1" />
<line x1="688" y1="283" x2="688" y2="289" stroke="#ff0000" stroke-width="1" />
<line x1="688" y1="322" x2="688" y2="328" stroke="#ff0000" stroke-width="1" />
<line x1="696" y1="283" x2="696" y2="289" stroke="#ff0000" stroke-width="1" />
<line x1="696" y1="322" x2="696" y2="328" stroke="#ff0000" stroke-width="1" />
<line x1="704" y1="283" x2="704" y2="289" stroke="#ff0000" stroke-width="1" />
<line x1="704" y1="322" x2="704" y2="328" stroke="#ff0000" stroke-width="1" />
<line x1="712" y1="283" x2="712" y2="289" stroke="#ff0000" stroke-width="1" />
<line x1="712" y1="322" x2="712" y2="328" stroke="#ff0000" stroke-width="1" />
<line x1="700.5" y1="259" x2="700.5" y2="288" stroke="#ff0000" stroke-width="1" />
<line x1="694" y1="266.5" x2="707" y2="266.5" stroke="#ff0000" stroke-width="1" />
<line x1="700.5" y1="323" x2="700.5" y2="352" stroke="#ff0000" stroke-width="1" />
<line x1="694" y1="344.5" x2="707" y2="344.5" stroke="#ff0000" stroke-width="1" />
<line x1="643" y1="302.5" x2="760" y2="302.5" stroke="#ffffff" stroke-width="1" />
<line x1="643" y1="308.5" x2="760" y2="308.5" stroke="#ffffff" stroke-width="1" />
<line x1="655" y1="300.5" x2="700" y2="300.5" stroke="#ffff00" stroke-width="1" />
<line x1="655" y1="310.5" x2="700" y2="310.5" stroke="#ffff00" stroke-width="1" />
<circle cx="662" cy="300.5" r="1" stroke="#ff00ff" fill="#ff00ff" stroke-width="1"/>
<circle cx="685" cy="300.5" r="1" stroke="#ff00ff" fill="#ff00ff" stroke-width="1"/>
<line x1="629" y1="305.5" x2="812" y2="305.5" stroke="#ff0000" stroke-width="1" />
<rect x="729.5" y="284.5" width="14" height="3" stroke="#ff0000" fill="none" stroke-width="1"/>
<rect x="729.5" y="323.5" width="14" height="3" stroke="#ff0000" fill="none" stroke-width="1"/>
<rect x="724.5" y="290.5" width="12" height="5" stroke="#ffffff" fill="none" stroke-width="1"/>
<rect x="724.5" y="315.5" width="12" height="5" stroke="#ffffff" fill="none" stroke-width="1"/>
<rect x="740.5" y="298.5" width="20" height="14" stroke="#ffffff" fill="none" stroke-width="1"/>
<line x1="743" y1="296" x2="743" y2="315" stroke="#ff0000" stroke-width="1" />
<line x1="753" y1="296" x2="753" y2="315" stroke="#ff0000" stroke-width="1" />
<rect x="775.5" y="298.5" width="14" height="13" stroke="#ffffff" fill="none" stroke-width="1"/>
<rect x="776" y="299" width="13" height="12" fill="url(#hy2)"/>
<line x1="766.5" y1="292" x2="766.5" y2="319" stroke="#ffffff" stroke-width="1" />
<line x1="782.5" y1="275" x2="782.5" y2="336" stroke="#ffffc0" stroke-width="1" />
<line x1="760" y1="294.5" x2="775" y2="294.5" stroke="#ff0000" stroke-width="1" />
<line x1="760" y1="316.5" x2="775" y2="316.5" stroke="#ff0000" stroke-width="1" />
<line x1="611" y1="201.0" x2="621" y2="201.0" stroke="#00ffff" stroke-width="1" />
<rect x="613.5" y="196.0" width="5" height="5" stroke="#00ffff" fill="none" stroke-width="1"/>
<line x1="621" y1="201.0" x2="648" y2="255" stroke="#00ffff" stroke-width="1" />
<line x1="625.5" y1="201.0" x2="635.5" y2="201.0" stroke="#00ffff" stroke-width="1" />
<rect x="628.0" y="196.0" width="5" height="5" stroke="#00ffff" fill="none" stroke-width="1"/>
<line x1="635.5" y1="201.0" x2="656" y2="255" stroke="#00ffff" stroke-width="1" />
<line x1="639.5" y1="201.0" x2="649.5" y2="201.0" stroke="#00ffff" stroke-width="1" />
<rect x="642.0" y="196.0" width="5" height="5" stroke="#00ffff" fill="none" stroke-width="1"/>
<line x1="649.5" y1="201.0" x2="660" y2="255" stroke="#00ffff" stroke-width="1" />
<line x1="653" y1="201.0" x2="663" y2="201.0" stroke="#00ffff" stroke-width="1" />
<rect x="655.5" y="196.0" width="5" height="5" stroke="#00ffff" fill="none" stroke-width="1"/>
<line x1="663" y1="201.0" x2="666" y2="255" stroke="#00ffff" stroke-width="1" />
<line x1="666" y1="201.0" x2="676" y2="201.0" stroke="#00ffff" stroke-width="1" />
<rect x="668.5" y="196.0" width="5" height="5" stroke="#00ffff" fill="none" stroke-width="1"/>
<line x1="676" y1="201.0" x2="678" y2="278" stroke="#00ffff" stroke-width="1" />
<line x1="681" y1="201.0" x2="691" y2="201.0" stroke="#00ffff" stroke-width="1" />
<rect x="683.5" y="196.0" width="5" height="5" stroke="#00ffff" fill="none" stroke-width="1"/>
<line x1="681" y1="201.0" x2="680" y2="278" stroke="#00ffff" stroke-width="1" />
<line x1="693" y1="201.0" x2="703" y2="201.0" stroke="#00ffff" stroke-width="1" />
<rect x="695.5" y="196.0" width="5" height="5" stroke="#00ffff" fill="none" stroke-width="1"/>
<line x1="693" y1="201.0" x2="690" y2="288" stroke="#00ffff" stroke-width="1" />
<line x1="705" y1="201.0" x2="715" y2="201.0" stroke="#00ffff" stroke-width="1" />
<rect x="707.5" y="196.0" width="5" height="5" stroke="#00ffff" fill="none" stroke-width="1"/>
<line x1="705" y1="201.0" x2="698" y2="268" stroke="#00ffff" stroke-width="1" />
<line x1="718" y1="201.0" x2="728" y2="201.0" stroke="#00ffff" stroke-width="1" />
<rect x="720.5" y="196.0" width="5" height="5" stroke="#00ffff" fill="none" stroke-width="1"/>
<line x1="718" y1="201.0" x2="704" y2="275" stroke="#00ffff" stroke-width="1" />
<line x1="730.5" y1="201.0" x2="740.5" y2="201.0" stroke="#00ffff" stroke-width="1" />
<rect x="733.0" y="196.0" width="5" height="5" stroke="#00ffff" fill="none" stroke-width="1"/>
<line x1="730.5" y1="201.0" x2="720" y2="231" stroke="#00ffff" stroke-width="1" />
<line x1="743.5" y1="201.0" x2="753.5" y2="201.0" stroke="#00ffff" stroke-width="1" />
<rect x="746.0" y="196.0" width="5" height="5" stroke="#00ffff" fill="none" stroke-width="1"/>
<line x1="743.5" y1="201.0" x2="733" y2="238" stroke="#00ffff" stroke-width="1" />
<line x1="760" y1="201.0" x2="770" y2="201.0" stroke="#00ffff" stroke-width="1" />
<rect x="762.5" y="196.0" width="5" height="5" stroke="#00ffff" fill="none" stroke-width="1"/>
<line x1="760" y1="201.0" x2="733" y2="255" stroke="#00ffff" stroke-width="1" />
<line x1="775" y1="201.0" x2="785" y2="201.0" stroke="#00ffff" stroke-width="1" />
<rect x="777.5" y="196.0" width="5" height="5" stroke="#00ffff" fill="none" stroke-width="1"/>
<line x1="775" y1="201.0" x2="733" y2="246" stroke="#00ffff" stroke-width="1" />
<line x1="788.5" y1="201.0" x2="798.5" y2="201.0" stroke="#00ffff" stroke-width="1" />
<rect x="791.0" y="196.0" width="5" height="5" stroke="#00ffff" fill="none" stroke-width="1"/>
<line x1="788.5" y1="201.0" x2="733" y2="256" stroke="#00ffff" stroke-width="1" />
<line x1="815.5" y1="201.0" x2="825.5" y2="201.0" stroke="#00ffff" stroke-width="1" />
<rect x="818.0" y="196.0" width="5" height="5" stroke="#00ffff" fill="none" stroke-width="1"/>
<line x1="815.5" y1="201.0" x2="739" y2="280" stroke="#00ffff" stroke-width="1" />
<line x1="832.5" y1="201.0" x2="842.5" y2="201.0" stroke="#00ffff" stroke-width="1" />
<rect x="835.0" y="196.0" width="5" height="5" stroke="#00ffff" fill="none" stroke-width="1"/>
<line x1="832.5" y1="201.0" x2="744" y2="280" stroke="#00ffff" stroke-width="1" />
<line x1="854" y1="201.0" x2="864" y2="201.0" stroke="#00ffff" stroke-width="1" />
<rect x="856.5" y="196.0" width="5" height="5" stroke="#00ffff" fill="none" stroke-width="1"/>
<line x1="854" y1="201.0" x2="762" y2="288" stroke="#00ffff" stroke-width="1" />
<line x1="854" y1="213.0" x2="864" y2="213.0" stroke="#00ffff" stroke-width="1" />
<rect x="856.5" y="208.0" width="5" height="5" stroke="#00ffff" fill="none" stroke-width="1"/>
<line x1="854" y1="213.0" x2="773" y2="294" stroke="#00ffff" stroke-width="1" />
<line x1="854" y1="222.5" x2="864" y2="222.5" stroke="#00ffff" stroke-width="1" />
<rect x="856.5" y="217.5" width="5" height="5" stroke="#00ffff" fill="none" stroke-width="1"/>
<line x1="854" y1="222.5" x2="779" y2="292" stroke="#00ffff" stroke-width="1" />
<line x1="854" y1="233.0" x2="864" y2="233.0" stroke="#00ffff" stroke-width="1" />
<rect x="856.5" y="228.0" width="5" height="5" stroke="#00ffff" fill="none" stroke-width="1"/>
<line x1="854" y1="233.0" x2="790" y2="297" stroke="#00ffff" stroke-width="1" />
<line x1="854" y1="367.0" x2="864" y2="367.0" stroke="#00ffff" stroke-width="1" />
<rect x="856.5" y="362.0" width="5" height="5" stroke="#00ffff" fill="none" stroke-width="1"/>
<line x1="854" y1="367.0" x2="786" y2="311" stroke="#00ffff" stroke-width="1" />
<line x1="854" y1="382.0" x2="864" y2="382.0" stroke="#00ffff" stroke-width="1" />
<rect x="856.5" y="377.0" width="5" height="5" stroke="#00ffff" fill="none" stroke-width="1"/>
<line x1="854" y1="382.0" x2="775" y2="315" stroke="#00ffff" stroke-width="1" />
<line x1="854" y1="396.0" x2="864" y2="396.0" stroke="#00ffff" stroke-width="1" />
<rect x="856.5" y="391.0" width="5" height="5" stroke="#00ffff" fill="none" stroke-width="1"/>
<line x1="854" y1="396.0" x2="767" y2="317" stroke="#00ffff" stroke-width="1" />
<line x1="854" y1="415.0" x2="864" y2="415.0" stroke="#00ffff" stroke-width="1" />
<rect x="856.5" y="410.0" width="5" height="5" stroke="#00ffff" fill="none" stroke-width="1"/>
<line x1="854" y1="415.0" x2="756" y2="317" stroke="#00ffff" stroke-width="1" />
<line x1="600.5" y1="415.0" x2="610.5" y2="415.0" stroke="#00ffff" stroke-width="1" />
<rect x="603.0" y="410.0" width="5" height="5" stroke="#00ffff" fill="none" stroke-width="1"/>
<line x1="610.5" y1="415.0" x2="655" y2="350" stroke="#00ffff" stroke-width="1" />
<line x1="626.5" y1="415.0" x2="636.5" y2="415.0" stroke="#00ffff" stroke-width="1" />
<rect x="629.0" y="410.0" width="5" height="5" stroke="#00ffff" fill="none" stroke-width="1"/>
<line x1="636.5" y1="415.0" x2="659" y2="352" stroke="#00ffff" stroke-width="1" />
<line x1="706" y1="415.0" x2="716" y2="415.0" stroke="#00ffff" stroke-width="1" />
<rect x="708.5" y="410.0" width="5" height="5" stroke="#00ffff" fill="none" stroke-width="1"/>
<line x1="706" y1="415.0" x2="673" y2="349" stroke="#00ffff" stroke-width="1" />
<line x1="730" y1="415.0" x2="740" y2="415.0" stroke="#00ffff" stroke-width="1" />
<rect x="732.5" y="410.0" width="5" height="5" stroke="#00ffff" fill="none" stroke-width="1"/>
<line x1="730" y1="415.0" x2="695" y2="341" stroke="#00ffff" stroke-width="1" />
<line x1="753.5" y1="415.0" x2="763.5" y2="415.0" stroke="#00ffff" stroke-width="1" />
<rect x="756.0" y="410.0" width="5" height="5" stroke="#00ffff" fill="none" stroke-width="1"/>
<line x1="753.5" y1="415.0" x2="701" y2="340" stroke="#00ffff" stroke-width="1" />
<line x1="777.5" y1="415.0" x2="787.5" y2="415.0" stroke="#00ffff" stroke-width="1" />
<rect x="780.0" y="410.0" width="5" height="5" stroke="#00ffff" fill="none" stroke-width="1"/>
<line x1="777.5" y1="415.0" x2="706" y2="336" stroke="#00ffff" stroke-width="1" />
<line x1="812" y1="415.0" x2="822" y2="415.0" stroke="#00ffff" stroke-width="1" />
<rect x="814.5" y="410.0" width="5" height="5" stroke="#00ffff" fill="none" stroke-width="1"/>
<line x1="812" y1="415.0" x2="733" y2="357" stroke="#00ffff" stroke-width="1" />
<rect x="613.5" y="294.5" width="5" height="4" stroke="#00ffff" fill="none" stroke-width="1"/>
<line x1="609" y1="305.5" x2="625" y2="305.5" stroke="#00ffff" stroke-width="1" />
<rect x="612.5" y="306.5" width="9" height="5" stroke="#00ffff" fill="none" stroke-width="1"/>
<line x1="234" y1="429.5" x2="595" y2="429.5" stroke="#ff0000" stroke-width="1" />
<path d="M282.5,404.5 A25,25 0 0 0 282.5,454.5" stroke="#ffffff" fill="none" stroke-width="1"/>
<line x1="270.5" y1="407" x2="270.5" y2="451" stroke="#ffffff" stroke-width="1" />
<rect x="282.5" y="404.5" width="6" height="50" stroke="#ffffff" fill="none" stroke-width="1"/>
<rect x="288.5" y="404.5" width="4" height="50" stroke="#ffffff" fill="none" stroke-width="1"/>
<line x1="292" y1="409.5" x2="337" y2="409.5" stroke="#ffffff" stroke-width="1" />
<line x1="292" y1="449.5" x2="337" y2="449.5" stroke="#ffffff" stroke-width="1" />
<rect x="337.5" y="404.5" width="5" height="50" stroke="#ffffff" fill="none" stroke-width="1"/>
<rect x="342.5" y="404.5" width="6" height="50" stroke="#ffffff" fill="none" stroke-width="1"/>
<line x1="348" y1="409.5" x2="396" y2="409.5" stroke="#ffffff" stroke-width="1" />
<line x1="348" y1="449.5" x2="396" y2="449.5" stroke="#ffffff" stroke-width="1" />
<rect x="396.5" y="404.5" width="6" height="50" stroke="#ffffff" fill="none" stroke-width="1"/>
<rect x="402.5" y="404.5" width="6" height="50" stroke="#ffffff" fill="none" stroke-width="1"/>
<line x1="408" y1="409.5" x2="497" y2="409.5" stroke="#ffffff" stroke-width="1" />
<line x1="408" y1="449.5" x2="497" y2="449.5" stroke="#ffffff" stroke-width="1" />
<rect x="386.5" y="404.5" width="10" height="5" stroke="#ffffff" fill="none" stroke-width="1"/>
<rect x="386.5" y="449.5" width="10" height="5" stroke="#ffffff" fill="none" stroke-width="1"/>
<path d="M386.5,404 Q387,398 391.5,398 Q396.5,398 396.5,404" stroke="#ffffff" fill="none" stroke-width="1"/>
<path d="M386.5,455 Q387,461 391.5,461 Q396.5,461 396.5,455" stroke="#ffffff" fill="none" stroke-width="1"/>
<rect x="496.5" y="404.5" width="9" height="49" stroke="#ffffff" fill="none" stroke-width="1"/>
<rect x="505.5" y="404.5" width="6" height="49" stroke="#ffffff" fill="none" stroke-width="1"/>
<path d="M511.5,404.5 L545.5,418 L545.5,441 L511.5,453.5" stroke="#ffffff" fill="none" stroke-width="1"/>
<path d="M545.5,418 L563,424.5 L563,434.5 L545.5,441" stroke="#ffffff" fill="none" stroke-width="1"/>
<path d="M511.5,404.5 L515,409 L519,407.5 M511.5,453.5 L515,449 L519,450.5" stroke="#ffffff" fill="none" stroke-width="1"/>
<rect x="514.5" y="425.5" width="8" height="7" stroke="#ffffff" fill="none" stroke-width="1"/>
<circle cx="532.5" cy="429" r="6" stroke="#ffffff" fill="none" stroke-width="1"/>
<rect x="546.5" y="427" width="6" height="4" stroke="#ffffff" fill="none" stroke-width="1"/>
<line x1="564.5" y1="424" x2="564.5" y2="435" stroke="#ffffff" stroke-width="1" />
<rect x="565.5" y="425.5" width="6" height="7" stroke="#ffffff" fill="none" stroke-width="1"/>
<line x1="568.5" y1="414" x2="568.5" y2="444" stroke="#ffffff" stroke-width="1" />
<polygon points="387,356.5 408.5,356.5 408.5,403 374.5,403" stroke="#ffffff" fill="none" stroke-width="1"/>
<polygon points="374.5,455 408.5,455 408.5,503 387,503" stroke="#ffffff" fill="none" stroke-width="1"/>
<rect x="405.5" y="342.5" width="11" height="6" stroke="#00ffff" fill="none" stroke-width="1"/>
<path d="M398,534 A58.5,58.5 0 1 1 397.9,534 Z M398,537.5 A55,55 0 1 0 398.1,537.5 Z" stroke="none" fill="url(#hy)" stroke-width="1"/>
<circle cx="398" cy="592.5" r="58.5" stroke="#ffffff" fill="none" stroke-width="1"/>
<circle cx="398" cy="592.5" r="55" stroke="#ffffff" fill="none" stroke-width="1"/>
<path d="M345.5,610 A55,55 0 0 0 450.5,610 L440,617 L440,634 L404,634 L404,621 L391,621 L391,634 L356,634 L356,617 Z" stroke="none" fill="url(#hy)" stroke-width="1"/>
<path d="M359,634.5 L437,634.5" stroke="#ffffff" fill="none" stroke-width="1"/>
<rect x="323.5" y="576.5" width="20" height="33" stroke="#ffffff" fill="none" stroke-width="1"/>
<rect x="324" y="577" width="19" height="32" fill="url(#hy)"/>
<rect x="310.5" y="590.5" width="42" height="5" stroke="#ffffff" fill="none" stroke-width="1"/>
<rect x="330" y="585" width="10" height="16" fill="#000"/>
<rect x="329.5" y="584.5" width="10" height="16" stroke="#ffffff" fill="none" stroke-width="1"/>
<line x1="303" y1="592.5" x2="360" y2="592.5" stroke="#ff0000" stroke-width="1" />
<line x1="320" y1="582.5" x2="335" y2="582.5" stroke="#ff0000" stroke-width="1" />
<line x1="320" y1="602.5" x2="335" y2="602.5" stroke="#ff0000" stroke-width="1" />
<line x1="332.5" y1="584" x2="332.5" y2="601" stroke="#ff0000" stroke-width="1" />
<line x1="336.5" y1="584" x2="336.5" y2="601" stroke="#ff0000" stroke-width="1" />
<polygon points="347.5,577 353.5,580 353.5,609 347.5,606" stroke="#ffffff" fill="none" stroke-width="1"/>
<line x1="347" y1="575" x2="356" y2="583" stroke="#ff0000" stroke-width="1" />
<line x1="346" y1="611" x2="355" y2="603" stroke="#ff0000" stroke-width="1" />
<rect x="452.5" y="576.5" width="20" height="33" stroke="#ffffff" fill="none" stroke-width="1"/>
<rect x="453" y="577" width="19" height="32" fill="url(#hy)"/>
<rect x="443.5" y="590.5" width="42" height="5" stroke="#ffffff" fill="none" stroke-width="1"/>
<rect x="456" y="585" width="10" height="16" fill="#000"/>
<rect x="456.5" y="584.5" width="10" height="16" stroke="#ffffff" fill="none" stroke-width="1"/>
<line x1="436" y1="592.5" x2="493" y2="592.5" stroke="#ff0000" stroke-width="1" />
<line x1="461" y1="582.5" x2="476" y2="582.5" stroke="#ff0000" stroke-width="1" />
<line x1="461" y1="602.5" x2="476" y2="602.5" stroke="#ff0000" stroke-width="1" />
<line x1="459.5" y1="584" x2="459.5" y2="601" stroke="#ff0000" stroke-width="1" />
<line x1="463.5" y1="584" x2="463.5" y2="601" stroke="#ff0000" stroke-width="1" />
<polygon points="448.5,577 442.5,580 442.5,609 448.5,606" stroke="#ffffff" fill="none" stroke-width="1"/>
<line x1="449" y1="575" x2="440" y2="583" stroke="#ff0000" stroke-width="1" />
<line x1="450" y1="611" x2="441" y2="603" stroke="#ff0000" stroke-width="1" />
<rect x="346.5" y="605.5" width="40" height="4" stroke="#ffffff" fill="none" stroke-width="1"/>
<rect x="409.5" y="605.5" width="40" height="4" stroke="#ffffff" fill="none" stroke-width="1"/>
<line x1="375" y1="602" x2="385" y2="611" stroke="#ff0000" stroke-width="1" />
<line x1="421" y1="602" x2="411" y2="611" stroke="#ff0000" stroke-width="1" />
<rect x="354.5" y="611.5" width="35" height="6" stroke="#ffffff" fill="none" stroke-width="1"/>
<rect x="403.5" y="611.5" width="37" height="6" stroke="#ffffff" fill="none" stroke-width="1"/>
<rect x="359.5" y="617.5" width="25" height="16" stroke="#ffffff" fill="none" stroke-width="1"/>
<rect x="410.5" y="617.5" width="26" height="16" stroke="#ffffff" fill="none" stroke-width="1"/>
<line x1="357" y1="614" x2="357" y2="620" stroke="#ff0000" stroke-width="1" />
<line x1="386" y1="614" x2="386" y2="620" stroke="#ff0000" stroke-width="1" />
<line x1="408" y1="614" x2="408" y2="620" stroke="#ff0000" stroke-width="1" />
<line x1="438" y1="614" x2="438" y2="620" stroke="#ff0000" stroke-width="1" />
<rect x="391" y="617" width="15" height="5" fill="#ffff00"/>
<line x1="397.5" y1="514" x2="397.5" y2="667" stroke="#ff0000" stroke-width="1" />
<line x1="263" y1="553.5" x2="288" y2="553.5" stroke="#00ffff" stroke-width="1" />
<path d="M268.5,551.5 L268.5,546 L270.5,543.5 L271.5,543.5 L271.5,551.5 M268.5,548.5 L271.5,548.5" stroke="#00ffff" fill="none" stroke-width="1"/>
<path d="M277.5,551.5 L277.5,546 L279.5,543.5 L280.5,543.5 L280.5,551.5 M277.5,548.5 L280.5,548.5" stroke="#00ffff" fill="none" stroke-width="1"/>
<line x1="273" y1="547.5" x2="277" y2="547.5" stroke="#00ffff" stroke-width="1" />
<path d="M269.5,556 L269.5,562.5 M268,562.5 L271,562.5 M268.5,557 L269.5,556" stroke="#00ffff" fill="none" stroke-width="1"/>
<path d="M272.5,555 L272.5,562.5" stroke="#00ffff" fill="none" stroke-width="1"/>
<path d="M274.5,555 L274.5,562.5 L276,562.5" stroke="#00ffff" fill="none" stroke-width="1"/>
<line x1="555.5" y1="514.5" x2="567" y2="514.5" stroke="#00ffff" stroke-width="1" />
<rect x="559.5" y="508.5" width="5" height="4" stroke="#00ffff" fill="none" stroke-width="1"/>
<line x1="555.5" y1="514.5" x2="398" y2="486" stroke="#00ffff" stroke-width="1" />
<line x1="555.5" y1="528.5" x2="567" y2="528.5" stroke="#00ffff" stroke-width="1" />
<rect x="559.5" y="522.5" width="5" height="4" stroke="#00ffff" fill="none" stroke-width="1"/>
<line x1="555.5" y1="528.5" x2="471" y2="577" stroke="#00ffff" stroke-width="1" />
<line x1="555.5" y1="544.5" x2="567" y2="544.5" stroke="#00ffff" stroke-width="1" />
<rect x="559.5" y="538.5" width="5" height="4" stroke="#00ffff" fill="none" stroke-width="1"/>
<line x1="555.5" y1="544.5" x2="472" y2="580" stroke="#00ffff" stroke-width="1" />
<line x1="555.5" y1="565.5" x2="567" y2="565.5" stroke="#00ffff" stroke-width="1" />
<rect x="559.5" y="559.5" width="5" height="4" stroke="#00ffff" fill="none" stroke-width="1"/>
<line x1="555.5" y1="565.5" x2="474" y2="589" stroke="#00ffff" stroke-width="1" />
<line x1="555.5" y1="586.5" x2="567" y2="586.5" stroke="#00ffff" stroke-width="1" />
<rect x="559.5" y="580.5" width="5" height="4" stroke="#00ffff" fill="none" stroke-width="1"/>
<line x1="555.5" y1="586.5" x2="474" y2="601" stroke="#00ffff" stroke-width="1" />
<line x1="555.5" y1="605.5" x2="567" y2="605.5" stroke="#00ffff" stroke-width="1" />
<rect x="559.5" y="599.5" width="5" height="4" stroke="#00ffff" fill="none" stroke-width="1"/>
<line x1="555.5" y1="605.5" x2="380" y2="622" stroke="#00ffff" stroke-width="1" />
<line x1="555.5" y1="632.5" x2="567" y2="632.5" stroke="#00ffff" stroke-width="1" />
<rect x="559.5" y="626.5" width="5" height="4" stroke="#00ffff" fill="none" stroke-width="1"/>
<line x1="555.5" y1="632.5" x2="425" y2="639" stroke="#00ffff" stroke-width="1" />
<line x1="282" y1="613.5" x2="293" y2="613.5" stroke="#00ffff" stroke-width="1" />
<rect x="284.5" y="607.5" width="5" height="4" stroke="#00ffff" fill="none" stroke-width="1"/>
<line x1="293" y1="613.5" x2="356" y2="618" stroke="#00ffff" stroke-width="1" />
<line x1="282" y1="637.5" x2="293" y2="637.5" stroke="#00ffff" stroke-width="1" />
<rect x="284.5" y="631.5" width="5" height="4" stroke="#00ffff" fill="none" stroke-width="1"/>
<line x1="293" y1="637.5" x2="388" y2="620" stroke="#00ffff" stroke-width="1" />
<text x="651" y="463" font-family="Liberation Sans" font-size="5.8" fill="#00ff00">技术要求:</text>
<text x="651" y="472.5" font-family="Liberation Sans" font-size="5.8" fill="#00ff00">1.装配前各零件去毛刺。</text>
<line x1="796.5" y1="433.5" x2="796.5" y2="656.5" stroke="#ffffff" stroke-width="1" />
<line x1="801.5" y1="433.5" x2="801.5" y2="656.5" stroke="#ffffff" stroke-width="1" />
<line x1="827.5" y1="433.5" x2="827.5" y2="656.5" stroke="#ffffff" stroke-width="1" />
<line x1="851.5" y1="433.5" x2="851.5" y2="656.5" stroke="#ffffff" stroke-width="1" />
<line x1="857.5" y1="433.5" x2="857.5" y2="656.5" stroke="#ffffff" stroke-width="1" />
<line x1="882.5" y1="433.5" x2="882.5" y2="656.5" stroke="#ffffff" stroke-width="1" />
<line x1="887.5" y1="433.5" x2="887.5" y2="656.5" stroke="#ffffff" stroke-width="1" />
<line x1="896" y1="433.5" x2="896" y2="656.5" stroke="#ffffff" stroke-width="1" />
<line x1="904.5" y1="433.5" x2="904.5" y2="656.5" stroke="#ffffff" stroke-width="1" />
<line x1="796.5" y1="433.5" x2="904.5" y2="433.5" stroke="#ffffff" stroke-width="1" />
<line x1="796.5" y1="438.5" x2="904.5" y2="438.5" stroke="#ffffff" stroke-width="1" />
<line x1="796.5" y1="443.5" x2="904.5" y2="443.5" stroke="#ffffff" stroke-width="1" />
<line x1="796.5" y1="446.5" x2="904.5" y2="446.5" stroke="#ffffff" stroke-width="1" />
<line x1="796.5" y1="449.5" x2="904.5" y2="449.5" stroke="#ffffff" stroke-width="1" />
<line x1="796.5" y1="452.5" x2="904.5" y2="452.5" stroke="#ffffff" stroke-width="1" />
<line x1="796.5" y1="455.5" x2="904.5" y2="455.5" stroke="#ffffff" stroke-width="1" />
<line x1="796.5" y1="460.5" x2="904.5" y2="460.5" stroke="#ffffff" stroke-width="1" />
<line x1="796.5" y1="463.5" x2="904.5" y2="463.5" stroke="#ffffff" stroke-width="1" />
<line x1="796.5" y1="466.5" x2="904.5" y2="466.5" stroke="#ffffff" stroke-width="1" />
<line x1="796.5" y1="469.5" x2="904.5" y2="469.5" stroke="#ffffff" stroke-width="1" />
<line x1="796.5" y1="474.5" x2="904.5" y2="474.5" stroke="#ffffff" stroke-width="1" />
<line x1="796.5" y1="477.5" x2="904.5" y2="477.5" stroke="#ffffff" stroke-width="1" />
<line x1="796.5" y1="480.5" x2="904.5" y2="480.5" stroke="#ffffff" stroke-width="1" />
<line x1="796.5" y1="483.5" x2="904.5" y2="483.5" stroke="#ffffff" stroke-width="1" />
<line x1="796.5" y1="488.5" x2="904.5" y2="488.5" stroke="#ffffff" stroke-width="1" />
<line x1="796.5" y1="493.5" x2="904.5" y2="493.5" stroke="#ffffff" stroke-width="1" />
<line x1="796.5" y1="496.5" x2="904.5" y2="496.5" stroke="#ffffff" stroke-width="1" />
<line x1="796.5" y1="499.5" x2="904.5" y2="499.5" stroke="#ffffff" stroke-width="1" />
<line x1="796.5" y1="502.5" x2="904.5" y2="502.5" stroke="#ffffff" stroke-width="1" />
<line x1="796.5" y1="505.5" x2="904.5" y2="505.5" stroke="#ffffff" stroke-width="1" />
<line x1="796.5" y1="508.5" x2="904.5" y2="508.5" stroke="#ffffff" stroke-width="1" />
<line x1="796.5" y1="513.5" x2="904.5" y2="513.5" stroke="#ffffff" stroke-width="1" />
<line x1="796.5" y1="516.5" x2="904.5" y2="516.5" stroke="#ffffff" stroke-width="1" />
<line x1="796.5" y1="519.5" x2="904.5" y2="519.5" stroke="#ffffff" stroke-width="1" />
<line x1="796.5" y1="524.5" x2="904.5" y2="524.5" stroke="#ffffff" stroke-width="1" />
<line x1="796.5" y1="527.5" x2="904.5" y2="527.5" stroke="#ffffff" stroke-width="1" />
<line x1="796.5" y1="530.5" x2="904.5" y2="530.5" stroke="#ffffff" stroke-width="1" />
<line x1="796.5" y1="533.5" x2="904.5" y2="533.5" stroke="#ffffff" stroke-width="1" />
<line x1="796.5" y1="536.5" x2="904.5" y2="536.5" stroke="#ffffff" stroke-width="1" />
<line x1="796.5" y1="541.5" x2="904.5" y2="541.5" stroke="#ffffff" stroke-width="1" />
<line x1="796.5" y1="544.5" x2="904.5" y2="544.5" stroke="#ffffff" stroke-width="1" />
<line x1="796.5" y1="547.5" x2="904.5" y2="547.5" stroke="#ffffff" stroke-width="1" />
<line x1="796.5" y1="550.5" x2="904.5" y2="550.5" stroke="#ffffff" stroke-width="1" />
<line x1="796.5" y1="555.5" x2="904.5" y2="555.5" stroke="#ffffff" stroke-width="1" />
<line x1="796.5" y1="560.5" x2="904.5" y2="560.5" stroke="#ffffff" stroke-width="1" />
<line x1="796.5" y1="563.5" x2="904.5" y2="563.5" stroke="#ffffff" stroke-width="1" />
<line x1="796.5" y1="566.5" x2="904.5" y2="566.5" stroke="#ffffff" stroke-width="1" />
<line x1="796.5" y1="569.5" x2="904.5" y2="569.5" stroke="#ffffff" stroke-width="1" />
<line x1="796.5" y1="572.5" x2="904.5" y2="572.5" stroke="#ffffff" stroke-width="1" />
<line x1="796.5" y1="577.5" x2="904.5" y2="577.5" stroke="#ffffff" stroke-width="1" />
<line x1="796.5" y1="580.5" x2="904.5" y2="580.5" stroke="#ffffff" stroke-width="1" />
<line x1="796.5" y1="583.5" x2="904.5" y2="583.5" stroke="#ffffff" stroke-width="1" />
<line x1="796.5" y1="586.5" x2="904.5" y2="586.5" stroke="#ffffff" stroke-width="1" />
<line x1="796.5" y1="591.5" x2="904.5" y2="591.5" stroke="#ffffff" stroke-width="1" />
<line x1="796.5" y1="594.5" x2="904.5" y2="594.5" stroke="#ffffff" stroke-width="1" />
<line x1="796.5" y1="597.5" x2="904.5" y2="597.5" stroke="#ffffff" stroke-width="1" />
<line x1="796.5" y1="600.5" x2="904.5" y2="600.5" stroke="#ffffff" stroke-width="1" />
<line x1="796.5" y1="605.5" x2="904.5" y2="605.5" stroke="#ffffff" stroke-width="1" />
<line x1="796.5" y1="610.5" x2="904.5" y2="610.5" stroke="#ffffff" stroke-width="1" />
<line x1="796.5" y1="613.5" x2="904.5" y2="613.5" stroke="#ffffff" stroke-width="1" />
<line x1="796.5" y1="616.5" x2="904.5" y2="616.5" stroke="#ffffff" stroke-width="1" />
<line x1="796.5" y1="619.5" x2="904.5" y2="619.5" stroke="#ffffff" stroke-width="1" />
<line x1="796.5" y1="622.5" x2="904.5" y2="622.5" stroke="#ffffff" stroke-width="1" />
<line x1="796.5" y1="625.5" x2="904.5" y2="625.5" stroke="#ffffff" stroke-width="1" />
<line x1="796.5" y1="630.5" x2="904.5" y2="630.5" stroke="#ffffff" stroke-width="1" />
<line x1="796.5" y1="633.5" x2="904.5" y2="633.5" stroke="#ffffff" stroke-width="1" />
<line x1="796.5" y1="636.5" x2="904.5" y2="636.5" stroke="#ffffff" stroke-width="1" />
<line x1="796.5" y1="641.5" x2="904.5" y2="641.5" stroke="#ffffff" stroke-width="1" />
<line x1="796.5" y1="644.5" x2="904.5" y2="644.5" stroke="#ffffff" stroke-width="1" />
<line x1="796.5" y1="647.5" x2="904.5" y2="647.5" stroke="#ffffff" stroke-width="1" />
<line x1="796.5" y1="650.5" x2="904.5" y2="650.5" stroke="#ffffff" stroke-width="1" />
<line x1="796.5" y1="656.5" x2="904.5" y2="656.5" stroke="#ffffff" stroke-width="1" />
<rect x="797.5" y="435.0" width="3" height="3.0" stroke="#00ff00" fill="none" stroke-width="1"/>
<rect x="804.5" y="435.0" width="20" height="3.0" stroke="#00ff00" fill="none" stroke-width="1"/>
<rect x="829.5" y="435.0" width="20" height="3.0" stroke="#00ff00" fill="none" stroke-width="1"/>
<rect x="853" y="434.5" width="2" height="4.0" fill="#00ff00"/>
<rect x="797.5" y="440.0" width="3" height="3.0" stroke="#00ff00" fill="none" stroke-width="1"/>
<rect x="804.5" y="440.0" width="20" height="3.0" stroke="#00ff00" fill="none" stroke-width="1"/>
<rect x="829.5" y="440.0" width="20" height="3.0" stroke="#00ff00" fill="none" stroke-width="1"/>
<rect x="853" y="439.5" width="2" height="4.0" fill="#00ff00"/>
<rect x="897.5" y="439.0" width="5" height="4.0" stroke="#00ff00" fill="none" stroke-width="1"/>
<rect x="798" y="444.5" width="3" height="2.0" fill="#00ff00"/>
<rect x="804.0" y="444.5" width="20" height="2.0" fill="#00ff00"/>
<rect x="829" y="444.5" width="12" height="2.0" fill="#00ff00"/>
<rect x="853" y="444.5" width="2" height="2.0" fill="#00ff00"/>
<rect x="798" y="447.5" width="3" height="2.0" fill="#00ff00"/>
<rect x="829" y="447.5" width="12" height="2.0" fill="#00ff00"/>
<rect x="853" y="447.5" width="2" height="2.0" fill="#00ff00"/>
<rect x="897.5" y="447.0" width="5" height="2.0" stroke="#00ff00" fill="none" stroke-width="1"/>
<rect x="798" y="450.5" width="3" height="2.0" fill="#00ff00"/>
<rect x="803.0" y="450.5" width="22" height="2.0" fill="#00ff00"/>
<rect x="829" y="450.5" width="16" height="2.0" fill="#00ff00"/>
<rect x="853" y="450.5" width="2" height="2.0" fill="#00ff00"/>
<rect x="864.5" y="450.0" width="9" height="2.0" stroke="#00ff00" fill="none" stroke-width="1"/>
<rect x="798" y="453.5" width="3" height="2.0" fill="#00ff00"/>
<rect x="806.0" y="453.5" width="16" height="2.0" fill="#00ff00"/>
<rect x="829" y="453.5" width="16" height="2.0" fill="#00ff00"/>
<rect x="853" y="453.5" width="2" height="2.0" fill="#00ff00"/>
<rect x="797.5" y="457.0" width="3" height="3.0" stroke="#00ff00" fill="none" stroke-width="1"/>
<rect x="803.5" y="457.0" width="22" height="3.0" stroke="#00ff00" fill="none" stroke-width="1"/>
<rect x="829.5" y="457.0" width="12" height="3.0" stroke="#00ff00" fill="none" stroke-width="1"/>
<rect x="853" y="456.5" width="2" height="4.0" fill="#00ff00"/>
<rect x="897.5" y="456.0" width="5" height="4.0" stroke="#00ff00" fill="none" stroke-width="1"/>
<rect x="798" y="461.5" width="3" height="2.0" fill="#00ff00"/>
<rect x="829" y="461.5" width="8" height="2.0" fill="#00ff00"/>
<rect x="853" y="461.5" width="2" height="2.0" fill="#00ff00"/>
<rect x="798" y="464.5" width="3" height="2.0" fill="#00ff00"/>
<rect x="806.0" y="464.5" width="16" height="2.0" fill="#00ff00"/>
<rect x="829" y="464.5" width="10" height="2.0" fill="#00ff00"/>
<rect x="853" y="464.5" width="2" height="2.0" fill="#00ff00"/>
<rect x="798" y="467.5" width="3" height="2.0" fill="#00ff00"/>
<rect x="804.0" y="467.5" width="20" height="2.0" fill="#00ff00"/>
<rect x="829" y="467.5" width="8" height="2.0" fill="#00ff00"/>
<rect x="853" y="467.5" width="2" height="2.0" fill="#00ff00"/>
<rect x="797.5" y="471.0" width="3" height="3.0" stroke="#00ff00" fill="none" stroke-width="1"/>
<rect x="807.5" y="471.0" width="14" height="3.0" stroke="#00ff00" fill="none" stroke-width="1"/>
<rect x="829.5" y="471.0" width="16" height="3.0" stroke="#00ff00" fill="none" stroke-width="1"/>
<rect x="853" y="470.5" width="2" height="4.0" fill="#00ff00"/>
<rect x="798" y="475.5" width="3" height="2.0" fill="#00ff00"/>
<rect x="804.0" y="475.5" width="20" height="2.0" fill="#00ff00"/>
<rect x="829" y="475.5" width="18" height="2.0" fill="#00ff00"/>
<rect x="853" y="475.5" width="2" height="2.0" fill="#00ff00"/>
<rect x="864.5" y="475.0" width="9" height="2.0" stroke="#00ff00" fill="none" stroke-width="1"/>
<rect x="897.5" y="475.0" width="5" height="2.0" stroke="#00ff00" fill="none" stroke-width="1"/>
<rect x="798" y="478.5" width="3" height="2.0" fill="#00ff00"/>
<rect x="829" y="478.5" width="14" height="2.0" fill="#00ff00"/>
<rect x="853" y="478.5" width="2" height="2.0" fill="#00ff00"/>
<rect x="897.5" y="478.0" width="5" height="2.0" stroke="#00ff00" fill="none" stroke-width="1"/>
<rect x="798" y="481.5" width="3" height="2.0" fill="#00ff00"/>
<rect x="829" y="481.5" width="12" height="2.0" fill="#00ff00"/>
<rect x="853" y="481.5" width="2" height="2.0" fill="#00ff00"/>
<rect x="864.5" y="481.0" width="9" height="2.0" stroke="#00ff00" fill="none" stroke-width="1"/>
<rect x="897.5" y="481.0" width="5" height="2.0" stroke="#00ff00" fill="none" stroke-width="1"/>
<rect x="797.5" y="485.0" width="3" height="3.0" stroke="#00ff00" fill="none" stroke-width="1"/>
<rect x="807.5" y="485.0" width="14" height="3.0" stroke="#00ff00" fill="none" stroke-width="1"/>
<rect x="829.5" y="485.0" width="12" height="3.0" stroke="#00ff00" fill="none" stroke-width="1"/>
<rect x="853" y="484.5" width="2" height="4.0" fill="#00ff00"/>
<rect x="897.5" y="484.0" width="5" height="4.0" stroke="#00ff00" fill="none" stroke-width="1"/>
<rect x="797.5" y="490.0" width="3" height="3.0" stroke="#00ff00" fill="none" stroke-width="1"/>
<rect x="806.5" y="490.0" width="16" height="3.0" stroke="#00ff00" fill="none" stroke-width="1"/>
<rect x="829.5" y="490.0" width="12" height="3.0" stroke="#00ff00" fill="none" stroke-width="1"/>
<rect x="853" y="489.5" width="2" height="4.0" fill="#00ff00"/>
<rect x="798" y="494.5" width="3" height="2.0" fill="#00ff00"/>
<rect x="806.0" y="494.5" width="16" height="2.0" fill="#00ff00"/>
<rect x="829" y="494.5" width="12" height="2.0" fill="#00ff00"/>
<rect x="853" y="494.5" width="2" height="2.0" fill="#00ff00"/>
<rect x="864.5" y="494.0" width="9" height="2.0" stroke="#00ff00" fill="none" stroke-width="1"/>
<rect x="798" y="497.5" width="3" height="2.0" fill="#00ff00"/>
<rect x="803.0" y="497.5" width="22" height="2.0" fill="#00ff00"/>
<rect x="829" y="497.5" width="10" height="2.0" fill="#00ff00"/>
<rect x="853" y="497.5" width="2" height="2.0" fill="#00ff00"/>
<rect x="897.5" y="497.0" width="5" height="2.0" stroke="#00ff00" fill="none" stroke-width="1"/>
<rect x="798" y="500.5" width="3" height="2.0" fill="#00ff00"/>
<rect x="829" y="500.5" width="12" height="2.0" fill="#00ff00"/>
<rect x="853" y="500.5" width="2" height="2.0" fill="#00ff00"/>
<rect x="897.5" y="500.0" width="5" height="2.0" stroke="#00ff00" fill="none" stroke-width="1"/>
<rect x="798" y="503.5" width="3" height="2.0" fill="#00ff00"/>
<rect x="829" y="503.5" width="16" height="2.0" fill="#00ff00"/>
<rect x="853" y="503.5" width="2" height="2.0" fill="#00ff00"/>
<rect x="864.5" y="503.0" width="9" height="2.0" stroke="#00ff00" fill="none" stroke-width="1"/>
<rect x="897.5" y="503.0" width="5" height="2.0" stroke="#00ff00" fill="none" stroke-width="1"/>
<rect x="798" y="506.5" width="3" height="2.0" fill="#00ff00"/>
<rect x="806.0" y="506.5" width="16" height="2.0" fill="#00ff00"/>
<rect x="829" y="506.5" width="8" height="2.0" fill="#00ff00"/>
<rect x="853" y="506.5" width="2" height="2.0" fill="#00ff00"/>
<rect x="897.5" y="506.0" width="5" height="2.0" stroke="#00ff00" fill="none" stroke-width="1"/>
<rect x="797.5" y="510.0" width="3" height="3.0" stroke="#00ff00" fill="none" stroke-width="1"/>
<rect x="803.5" y="510.0" width="22" height="3.0" stroke="#00ff00" fill="none" stroke-width="1"/>
<rect x="829.5" y="510.0" width="12" height="3.0" stroke="#00ff00" fill="none" stroke-width="1"/>
<rect x="853" y="509.5" width="2" height="4.0" fill="#00ff00"/>
<rect x="798" y="514.5" width="3" height="2.0" fill="#00ff00"/>
<rect x="806.0" y="514.5" width="16" height="2.0" fill="#00ff00"/>
<rect x="829" y="514.5" width="16" height="2.0" fill="#00ff00"/>
<rect x="853" y="514.5" width="2" height="2.0" fill="#00ff00"/>
<rect x="897.5" y="514.0" width="5" height="2.0" stroke="#00ff00" fill="none" stroke-width="1"/>
<rect x="798" y="517.5" width="3" height="2.0" fill="#00ff00"/>
<rect x="829" y="517.5" width="6" height="2.0" fill="#00ff00"/>
<rect x="853" y="517.5" width="2" height="2.0" fill="#00ff00"/>
<rect x="797.5" y="521.0" width="3" height="3.0" stroke="#00ff00" fill="none" stroke-width="1"/>
<rect x="803.5" y="521.0" width="22" height="3.0" stroke="#00ff00" fill="none" stroke-width="1"/>
<rect x="829.5" y="521.0" width="16" height="3.0" stroke="#00ff00" fill="none" stroke-width="1"/>
<rect x="853" y="520.5" width="2" height="4.0" fill="#00ff00"/>
<rect x="897.5" y="520.0" width="5" height="4.0" stroke="#00ff00" fill="none" stroke-width="1"/>
<rect x="798" y="525.5" width="3" height="2.0" fill="#00ff00"/>
<rect x="829" y="525.5" width="12" height="2.0" fill="#00ff00"/>
<rect x="853" y="525.5" width="2" height="2.0" fill="#00ff00"/>
<rect x="798" y="528.5" width="3" height="2.0" fill="#00ff00"/>
<rect x="804.0" y="528.5" width="20" height="2.0" fill="#00ff00"/>
<rect x="829" y="528.5" width="6" height="2.0" fill="#00ff00"/>
<rect x="853" y="528.5" width="2" height="2.0" fill="#00ff00"/>
<rect x="864.5" y="528.0" width="9" height="2.0" stroke="#00ff00" fill="none" stroke-width="1"/>
<rect x="897.5" y="528.0" width="5" height="2.0" stroke="#00ff00" fill="none" stroke-width="1"/>
<rect x="798" y="531.5" width="3" height="2.0" fill="#00ff00"/>
<rect x="806.0" y="531.5" width="16" height="2.0" fill="#00ff00"/>
<rect x="829" y="531.5" width="10" height="2.0" fill="#00ff00"/>
<rect x="853" y="531.5" width="2" height="2.0" fill="#00ff00"/>
<rect x="864.5" y="531.0" width="9" height="2.0" stroke="#00ff00" fill="none" stroke-width="1"/>
<rect x="798" y="534.5" width="3" height="2.0" fill="#00ff00"/>
<rect x="808.0" y="534.5" width="12" height="2.0" fill="#00ff00"/>
<rect x="829" y="534.5" width="12" height="2.0" fill="#00ff00"/>
<rect x="853" y="534.5" width="2" height="2.0" fill="#00ff00"/>
<rect x="864.5" y="534.0" width="9" height="2.0" stroke="#00ff00" fill="none" stroke-width="1"/>
<rect x="897.5" y="534.0" width="5" height="2.0" stroke="#00ff00" fill="none" stroke-width="1"/>
<rect x="797.5" y="538.0" width="3" height="3.0" stroke="#00ff00" fill="none" stroke-width="1"/>
<rect x="803.5" y="538.0" width="22" height="3.0" stroke="#00ff00" fill="none" stroke-width="1"/>
<rect x="829.5" y="538.0" width="20" height="3.0" stroke="#00ff00" fill="none" stroke-width="1"/>
<rect x="853" y="537.5" width="2" height="4.0" fill="#00ff00"/>
<rect x="798" y="542.5" width="3" height="2.0" fill="#00ff00"/>
<rect x="808.0" y="542.5" width="12" height="2.0" fill="#00ff00"/>
<rect x="829" y="542.5" width="14" height="2.0" fill="#00ff00"/>
<rect x="853" y="542.5" width="2" height="2.0" fill="#00ff00"/>
<rect x="798" y="545.5" width="3" height="2.0" fill="#00ff00"/>
<rect x="806.0" y="545.5" width="16" height="2.0" fill="#00ff00"/>
<rect x="829" y="545.5" width="18" height="2.0" fill="#00ff00"/>
<rect x="853" y="545.5" width="2" height="2.0" fill="#00ff00"/>
<rect x="798" y="548.5" width="3" height="2.0" fill="#00ff00"/>
<rect x="829" y="548.5" width="16" height="2.0" fill="#00ff00"/>
<rect x="853" y="548.5" width="2" height="2.0" fill="#00ff00"/>
<rect x="864.5" y="548.0" width="9" height="2.0" stroke="#00ff00" fill="none" stroke-width="1"/>
<rect x="797.5" y="552.0" width="3" height="3.0" stroke="#00ff00" fill="none" stroke-width="1"/>
<rect x="803.5" y="552.0" width="22" height="3.0" stroke="#00ff00" fill="none" stroke-width="1"/>
<rect x="829.5" y="552.0" width="12" height="3.0" stroke="#00ff00" fill="none" stroke-width="1"/>
<rect x="853" y="551.5" width="2" height="4.0" fill="#00ff00"/>
<rect x="897.5" y="551.0" width="5" height="4.0" stroke="#00ff00" fill="none" stroke-width="1"/>
<rect x="797.5" y="557.0" width="3" height="3.0" stroke="#00ff00" fill="none" stroke-width="1"/>
<rect x="803.5" y="557.0" width="22" height="3.0" stroke="#00ff00" fill="none" stroke-width="1"/>
<rect x="829.5" y="557.0" width="12" height="3.0" stroke="#00ff00" fill="none" stroke-width="1"/>
<rect x="853" y="556.5" width="2" height="4.0" fill="#00ff00"/>
<rect x="897.5" y="556.0" width="5" height="4.0" stroke="#00ff00" fill="none" stroke-width="1"/>
<rect x="798" y="561.5" width="3" height="2.0" fill="#00ff00"/>
<rect x="806.0" y="561.5" width="16" height="2.0" fill="#00ff00"/>
<rect x="829" y="561.5" width="14" height="2.0" fill="#00ff00"/>
<rect x="853" y="561.5" width="2" height="2.0" fill="#00ff00"/>
<rect x="864.5" y="561.0" width="9" height="2.0" stroke="#00ff00" fill="none" stroke-width="1"/>
<rect x="897.5" y="561.0" width="5" height="2.0" stroke="#00ff00" fill="none" stroke-width="1"/>
<rect x="798" y="564.5" width="3" height="2.0" fill="#00ff00"/>
<rect x="829" y="564.5" width="6" height="2.0" fill="#00ff00"/>
<rect x="853" y="564.5" width="2" height="2.0" fill="#00ff00"/>
<rect x="897.5" y="564.0" width="5" height="2.0" stroke="#00ff00" fill="none" stroke-width="1"/>
<rect x="798" y="567.5" width="3" height="2.0" fill="#00ff00"/>
<rect x="803.0" y="567.5" width="22" height="2.0" fill="#00ff00"/>
<rect x="829" y="567.5" width="16" height="2.0" fill="#00ff00"/>
<rect x="853" y="567.5" width="2" height="2.0" fill="#00ff00"/>
<rect x="798" y="570.5" width="3" height="2.0" fill="#00ff00"/>
<rect x="804.0" y="570.5" width="20" height="2.0" fill="#00ff00"/>
<rect x="829" y="570.5" width="12" height="2.0" fill="#00ff00"/>
<rect x="853" y="570.5" width="2" height="2.0" fill="#00ff00"/>
<rect x="897.5" y="570.0" width="5" height="2.0" stroke="#00ff00" fill="none" stroke-width="1"/>
<rect x="797.5" y="574.0" width="3" height="3.0" stroke="#00ff00" fill="none" stroke-width="1"/>
<rect x="807.5" y="574.0" width="14" height="3.0" stroke="#00ff00" fill="none" stroke-width="1"/>
<rect x="829.5" y="574.0" width="12" height="3.0" stroke="#00ff00" fill="none" stroke-width="1"/>
<rect x="853" y="573.5" width="2" height="4.0" fill="#00ff00"/>
<rect x="798" y="578.5" width="3" height="2.0" fill="#00ff00"/>
<rect x="804.0" y="578.5" width="20" height="2.0" fill="#00ff00"/>
<rect x="829" y="578.5" width="14" height="2.0" fill="#00ff00"/>
<rect x="853" y="578.5" width="2" height="2.0" fill="#00ff00"/>
<rect x="864.5" y="578.0" width="9" height="2.0" stroke="#00ff00" fill="none" stroke-width="1"/>
<rect x="897.5" y="578.0" width="5" height="2.0" stroke="#00ff00" fill="none" stroke-width="1"/>
<rect x="798" y="581.5" width="3" height="2.0" fill="#00ff00"/>
<rect x="829" y="581.5" width="16" height="2.0" fill="#00ff00"/>
<rect x="853" y="581.5" width="2" height="2.0" fill="#00ff00"/>
<rect x="864.5" y="581.0" width="9" height="2.0" stroke="#00ff00" fill="none" stroke-width="1"/>
<rect x="897.5" y="581.0" width="5" height="2.0" stroke="#00ff00" fill="none" stroke-width="1"/>
<rect x="798" y="584.5" width="3" height="2.0" fill="#00ff00"/>
<rect x="806.0" y="584.5" width="16" height="2.0" fill="#00ff00"/>
<rect x="829" y="584.5" width="8" height="2.0" fill="#00ff00"/>
<rect x="853" y="584.5" width="2" height="2.0" fill="#00ff00"/>
<rect x="864.5" y="584.0" width="9" height="2.0" stroke="#00ff00" fill="none" stroke-width="1"/>
<rect x="897.5" y="584.0" width="5" height="2.0" stroke="#00ff00" fill="none" stroke-width="1"/>
<rect x="797.5" y="588.0" width="3" height="3.0" stroke="#00ff00" fill="none" stroke-width="1"/>
<rect x="805.5" y="588.0" width="18" height="3.0" stroke="#00ff00" fill="none" stroke-width="1"/>
<rect x="829.5" y="588.0" width="20" height="3.0" stroke="#00ff00" fill="none" stroke-width="1"/>
<rect x="853" y="587.5" width="2" height="4.0" fill="#00ff00"/>
<rect x="897.5" y="587.0" width="5" height="4.0" stroke="#00ff00" fill="none" stroke-width="1"/>
<rect x="798" y="592.5" width="3" height="2.0" fill="#00ff00"/>
<rect x="808.0" y="592.5" width="12" height="2.0" fill="#00ff00"/>
<rect x="829" y="592.5" width="8" height="2.0" fill="#00ff00"/>
<rect x="853" y="592.5" width="2" height="2.0" fill="#00ff00"/>
<rect x="798" y="595.5" width="3" height="2.0" fill="#00ff00"/>
<rect x="803.0" y="595.5" width="22" height="2.0" fill="#00ff00"/>
<rect x="829" y="595.5" width="16" height="2.0" fill="#00ff00"/>
<rect x="853" y="595.5" width="2" height="2.0" fill="#00ff00"/>
<rect x="798" y="598.5" width="3" height="2.0" fill="#00ff00"/>
<rect x="829" y="598.5" width="14" height="2.0" fill="#00ff00"/>
<rect x="853" y="598.5" width="2" height="2.0" fill="#00ff00"/>
<rect x="864.5" y="598.0" width="9" height="2.0" stroke="#00ff00" fill="none" stroke-width="1"/>
<rect x="897.5" y="598.0" width="5" height="2.0" stroke="#00ff00" fill="none" stroke-width="1"/>
<rect x="797.5" y="602.0" width="3" height="3.0" stroke="#00ff00" fill="none" stroke-width="1"/>
<rect x="805.5" y="602.0" width="18" height="3.0" stroke="#00ff00" fill="none" stroke-width="1"/>
<rect x="829.5" y="602.0" width="20" height="3.0" stroke="#00ff00" fill="none" stroke-width="1"/>
<rect x="853" y="601.5" width="2" height="4.0" fill="#00ff00"/>
<rect x="897.5" y="601.0" width="5" height="4.0" stroke="#00ff00" fill="none" stroke-width="1"/>
<rect x="797.5" y="607.0" width="3" height="3.0" stroke="#00ff00" fill="none" stroke-width="1"/>
<rect x="803.5" y="607.0" width="22" height="3.0" stroke="#00ff00" fill="none" stroke-width="1"/>
<rect x="829.5" y="607.0" width="20" height="3.0" stroke="#00ff00" fill="none" stroke-width="1"/>
<rect x="853" y="606.5" width="2" height="4.0" fill="#00ff00"/>
<rect x="864.5" y="606.0" width="9" height="4.0" stroke="#00ff00" fill="none" stroke-width="1"/>
<rect x="897.5" y="606.0" width="5" height="4.0" stroke="#00ff00" fill="none" stroke-width="1"/>
<rect x="798" y="611.5" width="3" height="2.0" fill="#00ff00"/>
<rect x="808.0" y="611.5" width="12" height="2.0" fill="#00ff00"/>
<rect x="829" y="611.5" width="10" height="2.0" fill="#00ff00"/>
<rect x="853" y="611.5" width="2" height="2.0" fill="#00ff00"/>
<rect x="864.5" y="611.0" width="9" height="2.0" stroke="#00ff00" fill="none" stroke-width="1"/>
<rect x="897.5" y="611.0" width="5" height="2.0" stroke="#00ff00" fill="none" stroke-width="1"/>
<rect x="798" y="614.5" width="3" height="2.0" fill="#00ff00"/>
<rect x="806.0" y="614.5" width="16" height="2.0" fill="#00ff00"/>
<rect x="829" y="614.5" width="14" height="2.0" fill="#00ff00"/>
<rect x="853" y="614.5" width="2" height="2.0" fill="#00ff00"/>
<rect x="897.5" y="614.0" width="5" height="2.0" stroke="#00ff00" fill="none" stroke-width="1"/>
<rect x="798" y="617.5" width="3" height="2.0" fill="#00ff00"/>
<rect x="803.0" y="617.5" width="22" height="2.0" fill="#00ff00"/>
<rect x="829" y="617.5" width="16" height="2.0" fill="#00ff00"/>
<rect x="853" y="617.5" width="2" height="2.0" fill="#00ff00"/>
<rect x="798" y="620.5" width="3" height="2.0" fill="#00ff00"/>
<rect x="808.0" y="620.5" width="12" height="2.0" fill="#00ff00"/>
<rect x="829" y="620.5" width="10" height="2.0" fill="#00ff00"/>
<rect x="853" y="620.5" width="2" height="2.0" fill="#00ff00"/>
<rect x="864.5" y="620.0" width="9" height="2.0" stroke="#00ff00" fill="none" stroke-width="1"/>
<rect x="798" y="623.5" width="3" height="2.0" fill="#00ff00"/>
<rect x="829" y="623.5" width="18" height="2.0" fill="#00ff00"/>
<rect x="853" y="623.5" width="2" height="2.0" fill="#00ff00"/>
<rect x="797.5" y="627.0" width="3" height="3.0" stroke="#00ff00" fill="none" stroke-width="1"/>
<rect x="807.5" y="627.0" width="14" height="3.0" stroke="#00ff00" fill="none" stroke-width="1"/>
<rect x="829.5" y="627.0" width="16" height="3.0" stroke="#00ff00" fill="none" stroke-width="1"/>
<rect x="853" y="626.5" width="2" height="4.0" fill="#00ff00"/>
<rect x="798" y="631.5" width="3" height="2.0" fill="#00ff00"/>
<rect x="806.0" y="631.5" width="16" height="2.0" fill="#00ff00"/>
<rect x="829" y="631.5" width="12" height="2.0" fill="#00ff00"/>
<rect x="853" y="631.5" width="2" height="2.0" fill="#00ff00"/>
<rect x="798" y="634.5" width="3" height="2.0" fill="#00ff00"/>
<rect x="829" y="634.5" width="6" height="2.0" fill="#00ff00"/>
<rect x="853" y="634.5" width="2" height="2.0" fill="#00ff00"/>
<rect x="797.5" y="638.0" width="3" height="3.0" stroke="#00ff00" fill="none" stroke-width="1"/>
<rect x="804.5" y="638.0" width="20" height="3.0" stroke="#00ff00" fill="none" stroke-width="1"/>
<rect x="829.5" y="638.0" width="20" height="3.0" stroke="#00ff00" fill="none" stroke-width="1"/>
<rect x="853" y="637.5" width="2" height="4.0" fill="#00ff00"/>
<rect x="798" y="642.5" width="3" height="2.0" fill="#00ff00"/>
<rect x="803.0" y="642.5" width="22" height="2.0" fill="#00ff00"/>
<rect x="829" y="642.5" width="14" height="2.0" fill="#00ff00"/>
<rect x="853" y="642.5" width="2" height="2.0" fill="#00ff00"/>
<rect x="798" y="645.5" width="3" height="2.0" fill="#00ff00"/>
<rect x="804.0" y="645.5" width="20" height="2.0" fill="#00ff00"/>
<rect x="829" y="645.5" width="6" height="2.0" fill="#00ff00"/>
<rect x="853" y="645.5" width="2" height="2.0" fill="#00ff00"/>
<rect x="798" y="648.5" width="3" height="2.0" fill="#00ff00"/>
<rect x="808.0" y="648.5" width="12" height="2.0" fill="#00ff00"/>
<rect x="829" y="648.5" width="14" height="2.0" fill="#00ff00"/>
<rect x="853" y="648.5" width="2" height="2.0" fill="#00ff00"/>
<rect x="864.5" y="648.0" width="9" height="2.0" stroke="#00ff00" fill="none" stroke-width="1"/>
<rect x="897.5" y="648.0" width="5" height="2.0" stroke="#00ff00" fill="none" stroke-width="1"/>
<rect x="797" y="652.5" width="4" height="2" stroke="#00ff00" fill="none" stroke-width="1"/>
<rect x="812.5" y="652.5" width="4" height="2" stroke="#00ff00" fill="none" stroke-width="1"/>
<rect x="837.5" y="652.5" width="4" height="2" stroke="#00ff00" fill="none" stroke-width="1"/>
<rect x="852.5" y="652.5" width="4" height="2" stroke="#00ff00" fill="none" stroke-width="1"/>
<rect x="868" y="652.5" width="4" height="2" stroke="#00ff00" fill="none" stroke-width="1"/>
<rect x="897.5" y="652.5" width="4" height="2" stroke="#00ff00" fill="none" stroke-width="1"/>
<rect x="884.5" y="651.5" width="4" height="2" stroke="#00ff00" fill="none" stroke-width="1"/>
<rect x="890.5" y="651.5" width="4" height="2" stroke="#00ff00" fill="none" stroke-width="1"/>
<rect x="886.5" y="654.5" width="4" height="2" stroke="#00ff00" fill="none" stroke-width="1"/>
<line x1="796.5" y1="656.5" x2="796.5" y2="674.5" stroke="#ffffff" stroke-width="1" />
<line x1="805.5" y1="656.5" x2="805.5" y2="674.5" stroke="#ffffff" stroke-width="1" />
<line x1="826.5" y1="656.5" x2="826.5" y2="674.5" stroke="#ffffff" stroke-width="1" />
<line x1="838.5" y1="656.5" x2="838.5" y2="674.5" stroke="#ffffff" stroke-width="1" />
<line x1="868.5" y1="656.5" x2="868.5" y2="674.5" stroke="#ffffff" stroke-width="1" />
<line x1="904.5" y1="656.5" x2="904.5" y2="674.5" stroke="#ffffff" stroke-width="1" />
<line x1="796.5" y1="660.5" x2="838.5" y2="660.5" stroke="#ffffff" stroke-width="1" />
<line x1="796.5" y1="664.5" x2="838.5" y2="664.5" stroke="#ffffff" stroke-width="1" />
<line x1="796.5" y1="669.5" x2="838.5" y2="669.5" stroke="#ffffff" stroke-width="1" />
<line x1="838.5" y1="663.5" x2="904.5" y2="663.5" stroke="#ffffff" stroke-width="1" />
<line x1="838.5" y1="668.5" x2="904.5" y2="668.5" stroke="#ffffff" stroke-width="1" />
<line x1="847.5" y1="663.5" x2="847.5" y2="668.5" stroke="#ffffff" stroke-width="1" />
<line x1="796.5" y1="674.5" x2="904.5" y2="674.5" stroke="#ffffff" stroke-width="1" />
<rect x="799.5" y="657.5" width="4" height="2" stroke="#00ff00" fill="none" stroke-width="1"/>
<rect x="799.5" y="661.5" width="4" height="2" stroke="#00ff00" fill="none" stroke-width="1"/>
<rect x="799.5" y="666" width="4" height="2" stroke="#00ff00" fill="none" stroke-width="1"/>
<rect x="799.5" y="670.5" width="4" height="2" stroke="#00ff00" fill="none" stroke-width="1"/>
<rect x="814.5" y="657.5" width="4" height="2" stroke="#00ff00" fill="none" stroke-width="1"/>
<rect x="808.5" y="670.5" width="9" height="2" stroke="#00ff00" fill="none" stroke-width="1"/>
<rect x="820.5" y="670.5" width="4" height="2" stroke="#00ff00" fill="none" stroke-width="1"/>
<rect x="827" y="671" width="11" height="3" fill="#00ff00"/>
<rect x="879.5" y="658.5" width="12" height="3" stroke="#00ff00" fill="none" stroke-width="1"/>
<rect x="883.5" y="664.5" width="8" height="2" stroke="#00ff00" fill="none" stroke-width="1"/>
<rect x="841.5" y="665" width="4" height="2" stroke="#00ff00" fill="none" stroke-width="1"/>
<rect x="856" y="665" width="4" height="3" fill="#00ff00"/>
<rect x="843.5" y="670.5" width="8" height="3" stroke="#00ff00" fill="none" stroke-width="1"/>
<rect x="857.5" y="670.5" width="8" height="3" stroke="#00ff00" fill="none" stroke-width="1"/>
</svg>
<div class="abs" style="left:674px;top:615px;font-size:17.6px;color:#b4b4b4;white-space:nowrap;line-height:20px">CSDN @biyezuopinvip</div>
</div>
<div id="bottombar" class="abs">
 <svg class="abs" style="left:0;top:0" width="871" height="12" viewBox="113 788 871 12">
 <path d="M116.5,793 L116.5,800" stroke="#777"/><path d="M118,797 L122,793.5 L122,800 Z" fill="#777"/>
 <path d="M132,797 L136,793.5 L136,800 Z" fill="#777"/>
 <path d="M153,797 L149,793.5 L149,800 Z" fill="#777"/>
 <path d="M168,797 L164,793.5 L164,800 Z" fill="#777"/><path d="M169.5,793 L169.5,800" stroke="#777"/>
 <path d="M178,788 L184,800 L218,800 L224,788" fill="#fafafa" stroke="#999"/>
 <path d="M222,800 L229,788 M279,800 L286,788 M336,800 L343,788" stroke="#999" fill="none"/>
 </svg>
 <div class="abs" style="left:73px;top:0px;font-size:14.5px;font-weight:bold;color:#333;line-height:16px">模型</div>
 <div class="abs" style="left:116px;top:0px;font-size:12.5px;color:#333;line-height:16px">Layout1</div>
 <div class="abs" style="left:173px;top:0px;font-size:12.5px;color:#333;line-height:16px">Layout2</div>
</div>
</body></html>
